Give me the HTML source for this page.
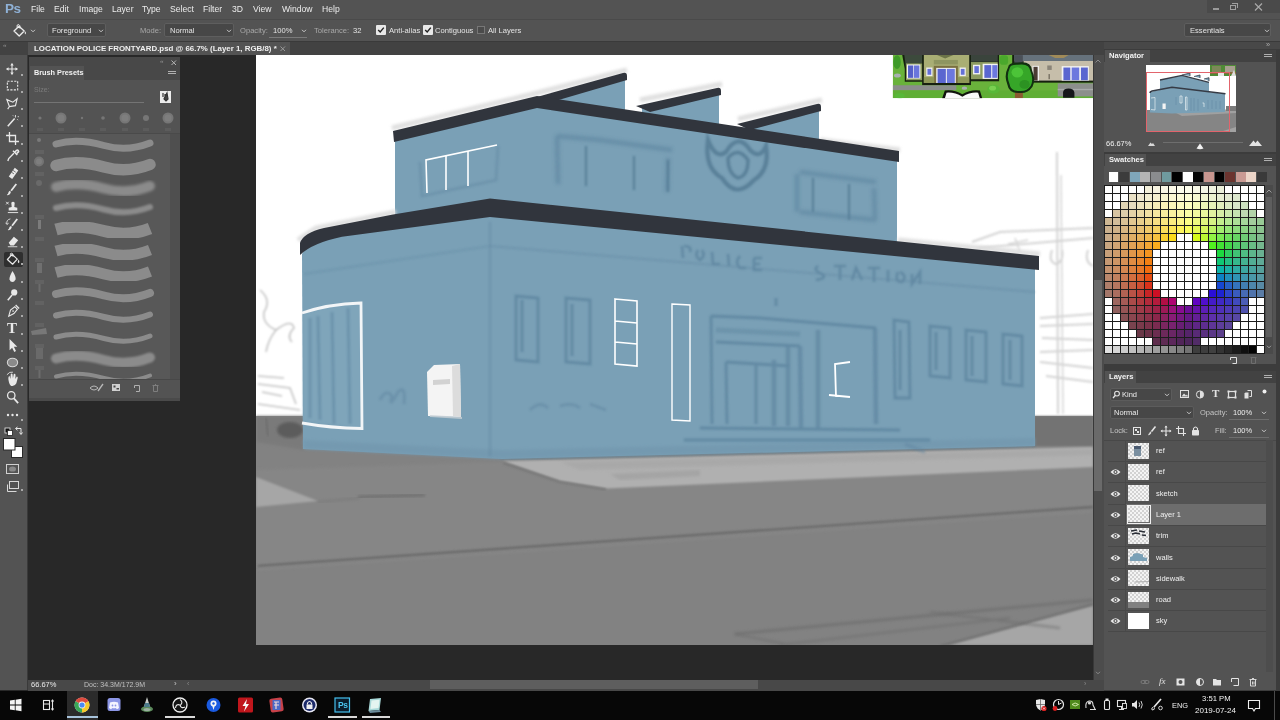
<!DOCTYPE html>
<html lang="en"><head><meta charset="utf-8"><title>Photoshop</title>
<style>
*{box-sizing:border-box;margin:0;padding:0}
html,body{width:1280px;height:720px;overflow:hidden;background:#282828}
body{font-family:"Liberation Sans",sans-serif;font-size:8px;color:#e0e0e0}
#app{position:relative;width:1280px;height:720px;overflow:hidden;background:#282828}
.abs{position:absolute}
.t{position:absolute;white-space:nowrap;line-height:1}
.m{top:5.400px;font-size:8.6px;color:#ececec}
.o{top:26.600px;font-size:7.6px;color:#e4e4e4}
.cb{top:25px;width:10px;height:10px;background:#e8e8e8;border-radius:1px}
.chk{background-color:#f4f4f4;background-image:linear-gradient(45deg,#d2d2d2 25%,transparent 25%,transparent 75%,#d2d2d2 75%),linear-gradient(45deg,#d2d2d2 25%,transparent 25%,transparent 75%,#d2d2d2 75%);background-size:4px 4px;background-position:0 0,2px 2px}
.t{will-change:transform}

</style></head>
<body>
<div id="app">
<!-- ===== menu bar ===== -->
<div class="abs" id="menubar" style="left:0;top:0;width:1280px;height:19px;background:#535353"></div>
<div class="t" style="left:5px;top:2px;font-size:13.500px;font-weight:bold;color:#8fb1d6;letter-spacing:-0.5px">Ps</div>
<div class="t m" style="left:31px">File</div>
<div class="t m" style="left:54px">Edit</div>
<div class="t m" style="left:79px">Image</div>
<div class="t m" style="left:112px">Layer</div>
<div class="t m" style="left:142px">Type</div>
<div class="t m" style="left:170px">Select</div>
<div class="t m" style="left:203px">Filter</div>
<div class="t m" style="left:232px">3D</div>
<div class="t m" style="left:253px">View</div>
<div class="t m" style="left:282px">Window</div>
<div class="t m" style="left:322px">Help</div>
<!-- window buttons -->
<div class="abs" style="left:1207px;top:0;width:73px;height:13px;background:#4a4a4a"></div>
<div class="abs" style="left:1213px;top:8px;width:6px;height:2px;background:#9a9a9a"></div>
<div class="abs" style="left:1230px;top:5px;width:6px;height:5px;border:1px solid #a0a0a0"></div>
<div class="abs" style="left:1232px;top:3px;width:6px;height:5px;border:1px solid #a0a0a0;border-left:none;border-bottom:none"></div>
<svg class="abs" style="left:1254px;top:3px" width="9" height="8"><path d="M1 0.5 L8 7.5 M8 0.5 L1 7.5" stroke="#a8a8a8" stroke-width="1.2" fill="none"/></svg>

<!-- ===== options bar ===== -->
<div class="abs" id="optbar" style="left:0;top:19px;width:1280px;height:22px;background:#535353;border-top:1px solid #4a4a4a"></div>
<div class="abs" style="left:0;top:41px;width:1280px;height:1px;background:#3a3a3a"></div>
<svg class="abs" style="left:12px;top:23px" width="16" height="15" viewBox="12 23 16 15"><path d="M19 26.200 L24.200 31 L19.200 36 L14 31 Z" fill="none" stroke="#ececec" stroke-width="1.300" stroke-linejoin="round"/><path d="M17.200 27.800 Q16.200 24.200 18.800 24.600 Q20.400 25 20 28.600" fill="none" stroke="#ececec" stroke-width="1"/><path d="M25.300 31.200 Q26.800 33.600 25.300 34.600 Q23.800 33.600 25.300 31.200 Z" fill="#ffffff"/></svg>
<svg class="abs" style="left:30px;top:29px" width="6" height="4"><path d="M1 0.800 L3 2.800 L5 0.800" stroke="#c8c8c8" fill="none"/></svg>
<div class="abs" style="left:47px;top:23px;width:59px;height:14px;background:#474747;border:1px solid #5e5e5e;border-radius:2px"></div>
<div class="t o" style="left:52px">Foreground</div>
<svg class="abs" style="left:98px;top:29px" width="6" height="4"><path d="M1 0.800 L3 2.800 L5 0.800" stroke="#c8c8c8" fill="none"/></svg>
<div class="t o" style="left:140px;color:#a8a8a8">Mode:</div>
<div class="abs" style="left:164px;top:23px;width:70px;height:14px;background:#474747;border:1px solid #5e5e5e;border-radius:2px"></div>
<div class="t o" style="left:170px">Normal</div>
<svg class="abs" style="left:226px;top:29px" width="6" height="4"><path d="M1 0.800 L3 2.800 L5 0.800" stroke="#c8c8c8" fill="none"/></svg>
<div class="t o" style="left:240px;color:#a8a8a8">Opacity:</div>
<div class="t o" style="left:273px">100%</div>
<div class="abs" style="left:269px;top:37px;width:38px;height:1px;background:#7a7a7a"></div>
<svg class="abs" style="left:301px;top:29px" width="6" height="4"><path d="M1 0.800 L3 2.800 L5 0.800" stroke="#c8c8c8" fill="none"/></svg>
<div class="t o" style="left:314px;color:#a8a8a8">Tolerance:</div>
<div class="t o" style="left:353px">32</div>
<div class="abs cb" style="left:376px"></div><svg class="abs" style="left:377px;top:26px" width="8" height="8"><path d="M1.2 4 L3.2 6 L6.8 1.6" stroke="#222" stroke-width="1.4" fill="none"/></svg>
<div class="t o" style="left:389px">Anti-alias</div>
<div class="abs cb" style="left:423px"></div><svg class="abs" style="left:424px;top:26px" width="8" height="8"><path d="M1.2 4 L3.2 6 L6.8 1.6" stroke="#222" stroke-width="1.4" fill="none"/></svg>
<div class="t o" style="left:435px">Contiguous</div>
<div class="abs" style="left:477px;top:26px;width:8px;height:8px;border:1px solid #777;background:#4b4b4b"></div>
<div class="t o" style="left:488px">All Layers</div>
<div class="abs" style="left:1184px;top:23px;width:87px;height:14px;background:#474747;border:1px solid #5e5e5e;border-radius:2px"></div>
<div class="t o" style="left:1190px">Essentials</div>
<svg class="abs" style="left:1264px;top:29px" width="6" height="4"><path d="M1 0.800 L3 2.800 L5 0.800" stroke="#c8c8c8" fill="none"/></svg>

<!-- ===== tab bar ===== -->
<div class="abs" style="left:0;top:42px;width:1104px;height:13px;background:#424242"></div>
<div class="abs" style="left:28px;top:42px;width:262px;height:13px;background:#535353"></div>
<div class="t" style="left:34px;top:45px;font-size:7.9px;font-weight:bold;color:#f0f0f0">LOCATION POLICE FRONTYARD.psd @ 66.7% (Layer 1, RGB/8) *</div>
<svg class="abs" style="left:280px;top:46px" width="6" height="6"><path d="M0.5 0.5 L5 5 M5 0.5 L0.5 5" stroke="#9a9a9a" fill="none"/></svg>
<div class="t" style="left:3px;top:42px;font-size:6px;color:#9a9a9a;letter-spacing:-0.5px">&#x2039;&#x2039;</div>

<!-- ===== left tool bar ===== -->
<div class="abs" id="toolbar" style="left:0;top:55px;width:27px;height:635px;background:#535353"></div>
<div class="abs" style="left:27px;top:55px;width:1px;height:635px;background:#3a3a3a"></div>
<div class="abs" style="left:4px;top:252px;width:19px;height:15px;background:#2f2f2f;border-radius:2px"></div>

<!-- ===== status bar ===== -->
<div class="abs" style="left:28px;top:680px;width:1076px;height:11px;background:#484848"></div>
<div class="t" style="left:31px;top:681px;font-size:7.5px;color:#e8e8e8">66.67%</div>
<div class="t" style="left:84px;top:681px;font-size:7px;color:#c0c0c0">Doc: 34.3M/172.9M</div>
<div class="t" style="left:174px;top:680px;font-size:8px;color:#c8c8c8">&#x203A;</div>
<div class="t" style="left:187px;top:680px;font-size:7px;color:#8a8a8a">&#x2039;</div>
<div class="abs" style="left:430px;top:680px;width:328px;height:9px;background:#5e5e5e"></div>
<div class="t" style="left:1084px;top:680px;font-size:7px;color:#8a8a8a">&#x203A;</div>
<!-- vertical scrollbar -->
<div class="abs" style="left:1093px;top:55px;width:11px;height:625px;background:#4c4c4c;border-left:1px solid #383838"></div>
<div class="abs" style="left:1094px;top:280px;width:8px;height:211px;background:#6a6a6a"></div>
<!-- ===== document canvas ===== -->
<svg class="abs" id="canvas" style="left:256px;top:55px" width="837" height="590" viewBox="256 55 837 590">
<defs>
<filter id="b1" x="-5%" y="-5%" width="110%" height="110%"><feGaussianBlur stdDeviation="0.8"/></filter>
<filter id="b2" x="-10%" y="-10%" width="120%" height="120%"><feGaussianBlur stdDeviation="1.6"/></filter>
<filter id="b3" x="-10%" y="-10%" width="120%" height="120%"><feGaussianBlur stdDeviation="3"/></filter>
<clipPath id="cv"><rect x="256" y="55" width="837" height="590"/></clipPath>
</defs>
<g clip-path="url(#cv)">
<rect x="256" y="55" width="837" height="590" fill="#ffffff"/>

<!-- ground -->
<g id="ground">
<path d="M256 416 L1093 416 L1093 645 L256 645 Z" fill="#828282"/>
<path d="M256 416 L304 416 L304 450 L256 442 Z" fill="#7a7a7a" filter="url(#b2)"/>
<path d="M1034 416 L1093 416 L1093 446 L1034 446 Z" fill="#737373" filter="url(#b1)"/>
<ellipse cx="290" cy="430" rx="13" ry="8" fill="#5c5c5c" filter="url(#b2)"/><path d="M266 418 L268 436" stroke="#6a6a6a" stroke-width="1.500" filter="url(#b1)"/>
<!-- band between sidewalk and road line -->
<path d="M256 470 L500 462 L1093 466 L1093 508 L256 566 Z" fill="#868686" filter="url(#b2)"/>
<!-- sidewalk -->
<path d="M503 461 L1093 447 L1093 467 L606 488.500 L560 481 Z" fill="#b0b0b0" filter="url(#b1)"/>
<path d="M560 462 L1093 449 L1093 455 L580 470 Z" fill="#a4a4a4" opacity="0.6" filter="url(#b2)"/><path d="M610 474 L700 470 L700 476 L620 480 Z" fill="#9c9c9c" opacity="0.6" filter="url(#b2)"/>
<path d="M503 463 L560 482 L606 489.500" stroke="#767676" stroke-width="2" fill="none" filter="url(#b1)"/><path d="M500 459 L1035 446" stroke="#5f7480" stroke-width="1.600" fill="none" filter="url(#b1)" opacity="0.8"/>
<!-- left wedge -->
<path d="M256 477 L318 501 L256 507 Z" fill="#a6a6a6" filter="url(#b1)"/>
<path d="M318 502 L360 498" stroke="#747474" stroke-width="2" filter="url(#b2)" opacity="0.6"/><path d="M358 497 L425 495" stroke="#6a6a6a" stroke-width="3" filter="url(#b2)" opacity="0.8"/>
<!-- road lines -->
<path d="M258 566 L1093 507" stroke="#6b6b6b" stroke-width="2.4" filter="url(#b1)"/>
<path d="M258 569 L1093 511" stroke="#8e8e8e" stroke-width="2" filter="url(#b2)" opacity="0.6"/>
<!-- bottom right corner -->
<path d="M950 645 L1093 606 L1093 645 Z" fill="#a6a6a6" filter="url(#b1)"/>
<path d="M735 634 L1093 600" stroke="#6a6a6a" stroke-width="2.2" filter="url(#b2)" opacity="0.8"/>
<path d="M780 645 L1010 618 M930 612 L1060 628 M735 634 L790 645" stroke="#6e6e6e" stroke-width="2" filter="url(#b2)" opacity="0.7"/>
<path d="M940 646 L1093 604" stroke="#6a6a6a" stroke-width="1.6" filter="url(#b1)" opacity="0.8"/>
</g>

<!-- sky sketch lines (right) -->
<g stroke="#cfcfcf" fill="none" stroke-width="2" filter="url(#b1)" opacity="0.9">
<path d="M1057 152 L1058 414"/><path d="M1061 175 L1063 414" stroke-width="1.4"/>
<path d="M972 242 L1000 232 L1093 228"/><path d="M978 248 L1093 238"/>
<path d="M1052 250 Q1048 262 1056 264 Q1064 262 1062 250"/>
<path d="M1088 250 Q1084 262 1093 266"/>
<path d="M1040 318 L1093 314 M1040 326 L1093 324 M1042 338 L1093 340 M1040 352 L1093 350 M1046 376 L1093 382 M1040 362 L1093 368"/>
<path d="M1015 238 L1020 252 M1008 244 L1028 240" stroke-width="1.4"/>
</g>
<!-- sky sketch lines (left) -->
<g stroke="#c4c4c4" fill="none" stroke-width="1.6" filter="url(#b1)">
<path d="M260 290 Q272 300 264 312 Q262 324 276 330 Q268 340 266 352"/>
<path d="M276 330 Q292 318 294 328 Q286 336 292 342"/>
<path d="M258 376 L284 378 M258 384 L290 388 L296 404 M262 392 L282 396 M258 404 L300 410"/>
</g>


<!-- reference picture (top-right) -->
<g transform="translate(885 50) scale(0.17188)">
<clipPath id="rc"><rect x="45" y="28" width="1166" height="252"/></clipPath>
<g clip-path="url(#rc)">
<rect x="45" y="28" width="1166" height="252" fill="#69b23b"/>
<rect x="45" y="205" width="370" height="30" fill="#8b8e8b"/>
<rect x="45" y="235" width="1166" height="45" fill="#5fae34"/>
<ellipse cx="70" cy="70" rx="22" ry="40" fill="#3f9a28"/>
<!-- left wing -->
<path d="M100 28 L230 28 L230 185 L115 185 L115 110 Z" fill="#16200f"/>
<path d="M112 28 L225 28 L225 72 L122 100 Z" fill="#3c4a3c"/>
<rect x="122" y="78" width="100" height="98" fill="#8b9a5e"/>
<rect x="128" y="84" width="78" height="82" fill="#f4f4f4"/><rect x="134" y="90" width="30" height="72" fill="#5560c8"/><rect x="168" y="90" width="32" height="72" fill="#6a76dc"/>
<!-- right wing -->
<rect x="488" y="28" width="176" height="154" fill="#16200f"/>
<rect x="492" y="28" width="164" height="40" fill="#3a443c"/>
<rect x="492" y="70" width="164" height="100" fill="#8c9b60"/>
<rect x="512" y="86" width="42" height="56" fill="#f0f0f0"/><rect x="520" y="94" width="26" height="40" fill="#6470d6"/>
<rect x="568" y="80" width="88" height="88" fill="#f4f4f4"/><rect x="578" y="88" width="40" height="74" fill="#5a66d0"/><rect x="624" y="88" width="30" height="74" fill="#6c78de"/>
<!-- central -->
<rect x="216" y="28" width="284" height="176" fill="#16200f"/>
<rect x="226" y="28" width="264" height="164" fill="#a9ae74"/>
<path d="M300 28 L400 28 L350 50 Z" fill="#6c7448"/>
<rect x="284" y="58" width="140" height="26" fill="#8e9560"/>
<rect x="284" y="92" width="140" height="100" fill="#7a7040"/>
<rect x="298" y="104" width="114" height="88" fill="#f0f0f0"/><rect x="306" y="110" width="48" height="82" fill="#5a66d0"/><rect x="360" y="110" width="46" height="82" fill="#6c78de"/>
<rect x="240" y="102" width="36" height="50" fill="#f0f0f0"/><rect x="247" y="110" width="22" height="34" fill="#6470d6"/>
<rect x="434" y="102" width="36" height="50" fill="#f0f0f0"/><rect x="441" y="110" width="22" height="34" fill="#6470d6"/>
<rect x="226" y="158" width="60" height="34" fill="#8e9858"/><rect x="424" y="158" width="66" height="34" fill="#8e9858"/>
<!-- bushes -->
<rect x="668" y="30" width="48" height="56" rx="18" fill="#4aa82c"/>
<ellipse cx="632" cy="228" rx="36" ry="26" fill="#58b838"/><ellipse cx="626" cy="222" rx="20" ry="14" fill="#7ad050"/>
<ellipse cx="86" cy="266" rx="30" ry="16" fill="#58b838"/>
<ellipse cx="72" cy="148" rx="20" ry="12" fill="#a8b0b0"/><ellipse cx="462" cy="222" rx="16" ry="9" fill="#a8b0b0"/>
<!-- right building -->
<rect x="740" y="28" width="480" height="162" fill="#16200f"/>
<rect x="752" y="28" width="460" height="36" fill="#66727c"/>
<rect x="752" y="30" width="50" height="44" fill="#4a5058"/>
<rect x="806" y="64" width="406" height="114" fill="#c6beaa"/>
<path d="M950 28 L1070 28 L1040 46 L990 46 Z" fill="#a08a58"/>
<rect x="858" y="92" width="38" height="86" fill="#f0f0f0"/><rect x="864" y="98" width="24" height="80" fill="#4a3c34"/>
<rect x="944" y="90" width="26" height="26" fill="#8a8478"/><rect x="952" y="140" width="6" height="30" fill="#5a5448"/>
<rect x="1028" y="94" width="158" height="84" fill="#f4f4f4"/><rect x="1038" y="102" width="40" height="74" fill="#5a66d0"/><rect x="1086" y="102" width="44" height="74" fill="#6c78de"/><rect x="1140" y="102" width="40" height="74" fill="#5a66d0"/>
<rect x="1005" y="194" width="210" height="76" fill="#8c8f8c"/><rect x="1005" y="226" width="210" height="8" fill="#a8abaa"/>
<path d="M1036 278 L1036 244 Q1040 224 1068 224 Q1098 224 1102 248 L1102 278 Z" fill="#15171a"/>
<!-- tree -->
<rect x="756" y="236" width="46" height="44" fill="#8a5a30"/>
<path d="M716 100 Q720 70 770 74 Q850 60 856 120 Q880 170 858 214 Q830 256 780 250 Q720 252 712 200 Q690 150 716 100 Z" fill="#123010"/>
<path d="M726 104 Q730 84 772 86 Q840 74 846 124 Q866 170 848 208 Q826 242 782 238 Q730 240 724 196 Q704 150 726 104 Z" fill="#36a628"/>
<ellipse cx="770" cy="130" rx="34" ry="30" fill="#4cc438"/>
<ellipse cx="812" cy="200" rx="30" ry="26" fill="#2c9222"/>
<!-- book -->
<path d="M332 282 L348 236 Q400 228 450 258 Q500 228 552 236 L566 282 Z" fill="#10140c"/>
<path d="M348 282 L358 248 Q404 244 450 272 Q496 244 542 248 L552 282 Z" fill="#fafafa"/>
</g>
</g>

<!-- ===== building ===== -->
<g id="bldg">
<!-- saw-tooth blue -->
<path d="M548 101 L625 80 L625 112 L548 106 Z" fill="#7aa0b6"/>
<path d="M642 108 L719 93 L719 126 L642 114 Z" fill="#7aa0b6"/>
<path d="M742 128 L819 111 L819 142 L742 134 Z" fill="#7aa0b6"/>
<!-- upper block -->
<path d="M395 138 L537 104 L897 158 L897 250 L490 215 L395 218 Z" fill="#7aa0b6"/>
<!-- lower block -->
<path d="M302 254 Q306 245 320 240 L342 235 L490 214 L1035 266 L1035 446 L502 459 L303 449 Z" fill="#7aa0b6"/>
<path d="M303 440 L304 449 L502 459 L1035 446 L1035 438 L502 450 Z" fill="#7398af" filter="url(#b2)" opacity="0.8"/>
</g>

<!-- soft light halo of sketch behind trims -->
<g stroke="#dcdcdc" stroke-width="5" fill="none" filter="url(#b2)" opacity="0.9">
<path d="M392 128 L537 93 L627 70"/><path d="M640 100 L722 84"/><path d="M738 119 L822 100"/><path d="M820 140 L900 150"/>
<path d="M298 240 L316 228 L396 212"/><path d="M898 240 L1040 254"/>
</g>
<!-- shading strokes on walls (darker blue) -->
<g stroke="#5f86a0" fill="none" stroke-width="2.8" filter="url(#b1)" opacity="0.85">
<!-- upper-middle window -->
<path d="M557 136 L558 184 M557 136 L600 140 L672 150 M668 158 L667 192" stroke-width="4.500" filter="url(#b2)" opacity="0.8"/><path d="M586 146 L586 186 M634 156 L634 190 M668 160 L668 192" stroke-width="1.800" stroke="#4f7690"/>
<!-- badge -->
<path d="M708 140 Q704 168 722 178 Q736 200 754 180 Q770 170 766 146 Q760 160 750 150 Q738 132 726 152 Q716 160 708 140 Z" stroke-width="4.200" stroke="#557b94"/>
<path d="M728 158 Q738 146 748 160 Q748 176 738 178 Q728 174 728 158 Z" stroke-width="3.400" stroke="#557b94"/>
<!-- upper right window -->
<path d="M797 174 L797 212 M800 172 L876 182 M874 188 L875 220 M800 212 L876 220" stroke-width="4.500" filter="url(#b2)" opacity="0.75"/><path d="M813 178 L813 212 M849 184 L849 220" stroke-width="1.800" stroke="#4f7690"/>
<!-- upper-left window shadow -->
<path d="M420 162 L422 196 L496 180 L498 146" opacity="0.5"/>
<!-- sign text POLICE STATION -->
<path d="M682 246 L683 258 M684 246 Q692 246 690 252 M698 250 Q694 256 700 260 Q706 256 702 250 M712 252 L713 264 L720 264 M728 254 L729 266 M740 256 Q734 262 740 268 L746 268 M754 258 L754 270 L762 270 M754 264 L760 264 M754 258 L762 258" stroke-width="2.6"/>
<path d="M818 266 Q812 270 822 274 Q828 278 816 280 M834 266 L846 266 M840 266 L840 280 M852 280 L856 268 L862 280 M868 268 L880 268 M874 268 L874 282 M888 270 L888 282 M898 272 Q894 282 902 282 Q908 276 900 272 M912 274 L912 284 L920 272 L920 284" stroke-width="2.6"/>
<path d="M490 222 L490 456" stroke-width="2" opacity="0.5"/>
<path d="M490 246 L1035 292" stroke-width="2" opacity="0.45"/>
<path d="M304 274 L490 246" stroke-width="2" opacity="0.4"/>
<!-- lower windows left pair -->
<path d="M516 296 L516 360 L538 362 L538 298 Z M522 300 L522 352 M566 298 L566 362 L590 364 L590 300 Z M572 304 L572 356"/>
<path d="M303 314 Q330 304 361 303 L361 428 L303 421 Z" fill="#82a8be" stroke="none" opacity="0.7"/>
<!-- corner window inner shading -->
<path d="M318 316 L320 420 M332 312 L334 424 M348 308 L350 424 M310 318 L310 418" stroke-width="3" opacity="0.6"/>
<!-- graffiti -->
<path d="M380 400 Q386 388 392 396 Q388 410 398 392 Q406 384 404 404 M530 410 Q540 400 548 408 M560 406 Q572 402 580 408 M590 404 L606 410"  opacity="0.6"/>
<!-- door / entrance -->
<path d="M711 316 L712 424 M711 316 L760 318 L876 328 M716 342 L800 346 M726 362 L727 424 M756 364 L756 424 M726 362 L790 366 M776 298 L776 306 M700 428 L900 430 M684 440 L930 440"/>
<path d="M774 360 L774 426 M788 346 L788 426 M800 346 L801 428 M818 330 L818 428 M875 328 L876 424" stroke-width="4.500" opacity="0.8"/>
<path d="M716 330 L800 334" stroke-width="5" opacity="0.55"/>
<!-- windows right -->
<path d="M894 320 L895 398 L910 398 L909 322 Z M900 330 L900 390 M930 326 L930 376 L950 378 L950 328 Z M936 332 L936 370 M966 330 L966 380 L986 382 L986 332 Z M972 336 L972 376 M1003 334 L1003 384 L1022 386 L1022 336 Z M1010 340 L1010 380"/>
<path d="M905 444 L925 452" stroke-width="4" opacity="0.5"/>
</g>

<!-- white outlines -->
<g stroke="#ffffff" fill="none" stroke-width="1.6">
<path d="M427 193 L426 160 L497 145"/><path d="M446 156 L446 190 M468 151 L468 186"/>
<path d="M302 313 Q328 304 361 303 L362 428.500 Q330 428 302 423" stroke-width="2.800" stroke="#f2f5f7"/>
<path d="M615 299 L637 301 L637 366 L615 364 Z M615 321 L637 323 M615 342 L637 344"/>
<path d="M672 304 L690 305 L690 421 L672 420 Z" stroke-width="1.4"/>
<path d="M836 397 L835 364 L850 362 M829 395 L850 397" stroke-width="1.8"/>
</g>
<!-- mailbox -->
<path d="M427 372 L434 365 L460 364 L461 417 L428 416 Z" fill="#f4f4f4"/>
<path d="M452 366 L460 364 L461 417 L453 416 Z" fill="#dcdcdc"/>
<path d="M433 380 L450 379 L450 384 L433 385 Z" fill="#d2d2d2"/>
<path d="M430 416 L462 418" stroke="#c8d0d6" stroke-width="2" opacity="0.8"/>

<!-- dark trims -->
<g fill="#31353d">
<path d="M537 97 L623 73 Q627 72 627 76 L627 80 L545 104 Z"/>
<path d="M636 106 L717 88 Q721 87 721 91 L721 95 L650 112 Z"/>
<path d="M737 124 L817 104 Q821 103 821 107 L821 111 L750 130 Z"/>
<path d="M393 131 L537 96 L899 151 L899 162 L537 108 L394 142 Z"/>
<path d="M300 255 L300 243 Q303 233 324 228 L393 214.4 L490 198.5 L1039 256 L1039 270 L490 217 L342 236.7 Q312 243 300 255 Z"/>
</g>
</g>
</svg>
<!-- ===== Brush Presets panel ===== -->
<div class="abs" style="left:29px;top:57px;width:151px;height:344px;background:#535353"></div>
<div class="abs" style="left:29px;top:57px;width:151px;height:9px;background:#484848"></div>
<div class="abs" style="left:29px;top:66px;width:151px;height:14px;background:#484848"></div>
<div class="abs" style="left:30px;top:66px;width:54px;height:14px;background:#535353"></div>
<div class="t" style="left:34px;top:69px;font-size:7.3px;font-weight:bold;color:#f2f2f2">Brush Presets</div>
<div class="t" style="left:160px;top:58px;font-size:6px;color:#9a9a9a;letter-spacing:-0.5px">&#x2039;&#x2039;</div>
<svg class="abs" style="left:171px;top:60px" width="6" height="6"><path d="M0.5 0.5 L5 5 M5 0.5 L0.5 5" stroke="#b4b4b4" fill="none"/></svg>
<div class="abs" style="left:168px;top:71px;width:8px;height:1px;background:#b0b0b0;box-shadow:0 2px 0 #b0b0b0"></div>
<div class="t" style="left:34px;top:86px;font-size:7px;color:#7c7c7c">Size:</div>
<div class="abs" style="left:34px;top:101.500px;width:110px;height:1.600px;background:#747474"></div>
<div class="abs" style="left:160px;top:91px;width:11px;height:12px;background:#ececec"></div>
<svg class="abs" style="left:160px;top:91px" width="11" height="12"><path d="M3 2 L3 6 M5 3 L5 6 M7 2 L8 8 L6 10 L4 8 Z" stroke="#333" stroke-width="1.2" fill="#444"/></svg>
<svg class="abs" style="left:29px;top:108px" width="151" height="26" viewBox="29 108 151 26"><circle cx="40" cy="118" r="1.6" fill="#767676"/><rect x="37" y="128" width="6" height="3" fill="#5c5c5c"/><circle cx="61" cy="118" r="5.5" fill="#767676"/><circle cx="61" cy="118" r="3.5" fill="#7e7e7e"/><rect x="58" y="128" width="6" height="3" fill="#5c5c5c"/><circle cx="82" cy="118" r="1.2" fill="#767676"/><rect x="79" y="128" width="6" height="3" fill="#5c5c5c"/><circle cx="103" cy="118" r="1.8" fill="#767676"/><rect x="100" y="128" width="6" height="3" fill="#5c5c5c"/><circle cx="125" cy="118" r="5.5" fill="#767676"/><circle cx="125" cy="118" r="3.5" fill="#7e7e7e"/><rect x="122" y="128" width="6" height="3" fill="#5c5c5c"/><circle cx="146" cy="118" r="3" fill="#767676"/><rect x="143" y="128" width="6" height="3" fill="#5c5c5c"/><circle cx="168" cy="118" r="5.5" fill="#767676"/><circle cx="168" cy="118" r="3.5" fill="#7e7e7e"/><rect x="165" y="128" width="6" height="3" fill="#5c5c5c"/></svg>
<div class="abs" style="left:29px;top:134px;width:141px;height:245px;background:#585858"></div>
<div class="abs" style="left:170px;top:134px;width:10px;height:245px;background:#4f4f4f"></div>
<div class="abs" style="left:29px;top:133px;width:151px;height:1px;background:#4a4a4a"></div>
<svg class="abs" style="left:29px;top:134px" width="141" height="245" viewBox="29 134 141 245"><defs><filter id="lf2" x="-10%" y="-60%" width="120%" height="220%"><feGaussianBlur stdDeviation="1.4"/></filter><filter id="lf3" x="-10%" y="-60%" width="120%" height="220%"><feGaussianBlur stdDeviation="1.1"/></filter><filter id="lf4" x="-10%" y="-60%" width="120%" height="220%"><feGaussianBlur stdDeviation="0.3"/></filter><filter id="lf5" x="-10%" y="-60%" width="120%" height="220%"><feGaussianBlur stdDeviation="0.5"/></filter><filter id="lf6" x="-10%" y="-60%" width="120%" height="220%"><feGaussianBlur stdDeviation="0.5"/></filter><filter id="lf7" x="-10%" y="-60%" width="120%" height="220%"><feGaussianBlur stdDeviation="0.4"/></filter><filter id="lf8" x="-10%" y="-60%" width="120%" height="220%"><feGaussianBlur stdDeviation="0.5"/></filter><filter id="lf9" x="-10%" y="-60%" width="120%" height="220%"><feGaussianBlur stdDeviation="0.3"/></filter><filter id="lf10" x="-10%" y="-60%" width="120%" height="220%"><feGaussianBlur stdDeviation="1"/></filter><filter id="lf11" x="-10%" y="-60%" width="120%" height="220%"><feGaussianBlur stdDeviation="0.4"/></filter></defs><path d="M56 144 C 72 139.5, 88 141, 104 145.5 S 136 148.5, 150 143" stroke="#8b8b8b" stroke-width="7" fill="none" stroke-linecap="round"/><path d="M56 165.5 C 72 161, 88 162.5, 104 167 S 136 170, 150 164.5" stroke="#8b8b8b" stroke-width="11.5" fill="none" stroke-linecap="round"/><path d="M56 187 C 72 182.5, 88 184, 104 188.5 S 136 191.5, 150 186" stroke="#8b8b8b" stroke-width="10" fill="none" stroke-linecap="round" filter="url(#lf2)"/><path d="M56 208 C 72 203.5, 88 205, 104 209.5 S 136 212.5, 150 207" stroke="#8b8b8b" stroke-width="6" fill="none" stroke-linecap="round" filter="url(#lf3)"/><path d="M56 229.5 C 72 225, 88 226.5, 104 231 S 136 234, 150 228.5" stroke="#8b8b8b" stroke-width="12" fill="none" stroke-linecap="butt" filter="url(#lf4)"/><path d="M56 251 C 72 246.5, 88 248, 104 252.5 S 136 255.5, 150 250" stroke="#8b8b8b" stroke-width="11" fill="none" stroke-linecap="butt" filter="url(#lf5)"/><path d="M56 272.5 C 72 268, 88 269.5, 104 274 S 136 277, 150 271.5" stroke="#8b8b8b" stroke-width="11" fill="none" stroke-linecap="butt" filter="url(#lf6)"/><path d="M56 294 C 72 289.5, 88 291, 104 295.5 S 136 298.5, 150 293" stroke="#8b8b8b" stroke-width="8" fill="none" stroke-linecap="round" filter="url(#lf7)"/><path d="M56 315.5 C 72 311, 88 312.5, 104 317 S 136 320, 150 314.5" stroke="#8b8b8b" stroke-width="6" fill="none" stroke-linecap="round" filter="url(#lf8)"/><path d="M56 337 C 72 332.5, 88 334, 104 338.5 S 136 341.5, 150 336" stroke="#8b8b8b" stroke-width="5" fill="none" stroke-linecap="round" filter="url(#lf9)"/><path d="M56 358.5 C 72 354, 88 355.5, 104 360 S 136 363, 150 357.5" stroke="#8b8b8b" stroke-width="10" fill="none" stroke-linecap="round" filter="url(#lf10)"/><path d="M56 376.5 C 72 372, 88 373.5, 104 378 S 136 381, 150 375.5" stroke="#8b8b8b" stroke-width="4" fill="none" stroke-linecap="round" filter="url(#lf11)"/><circle cx="39" cy="140" r="2" fill="#7a7a7a"/><circle cx="39" cy="161.5" r="5" fill="#747474"/><circle cx="39" cy="161.5" r="3" fill="#7e7e7e"/><circle cx="39" cy="183" r="3" fill="#6a6a6a"/><rect x="38" y="220" width="3" height="9" fill="#7c7c7c"/><rect x="37" y="263" width="5" height="10" fill="#707070"/><rect x="38.5" y="283" width="2" height="9" fill="#6c6c6c"/><path d="M31 331 L46 328 L47 334 L32 335 Z" fill="#787878"/><rect x="36" y="347" width="7" height="12" fill="#6a6a6a"/><rect x="38.5" y="370" width="2" height="8" fill="#6c6c6c"/><rect x="35" y="150" width="9" height="4" fill="#626262"/><rect x="35" y="172" width="9" height="4" fill="#626262"/><rect x="35" y="215" width="9" height="4" fill="#626262"/><rect x="35" y="237" width="9" height="4" fill="#626262"/><rect x="35" y="258" width="9" height="4" fill="#626262"/><rect x="35" y="280" width="9" height="4" fill="#626262"/><rect x="35" y="301" width="9" height="4" fill="#626262"/><rect x="35" y="323" width="9" height="4" fill="#626262"/><rect x="35" y="344" width="9" height="4" fill="#626262"/><rect x="35" y="366" width="9" height="4" fill="#626262"/></svg>
<div class="abs" style="left:29px;top:379px;width:151px;height:1px;background:#484848"></div>
<svg class="abs" style="left:88px;top:382px" width="76" height="12" viewBox="88 382 76 12"><path d="M90 388 Q94 384 98 388 Q94 392 90 388 Z" fill="none" stroke="#b8b8b8"/><path d="M98 391 L103 384" stroke="#b8b8b8" stroke-width="1.3"/><rect x="112" y="384" width="8" height="7" fill="#d0d0d0"/><rect x="113.5" y="385.5" width="2" height="2" fill="#444"/><rect x="116.5" y="388" width="2.5" height="1.5" fill="#444"/><path d="M134.5 385.5 L139.5 385.5 L139.5 391.5 L136 391.5 M134.500 385.5 L134.500 388" stroke="#b0b0b0" fill="none"/><path d="M153.5 386 L153.5 391.500 L157.500 391.500 L157.500 386 M152.500 385.5 L158.500 385.5 M155 384.5 L156 384.5" stroke="#7e7e7e" fill="none"/></svg>
<div class="abs" style="left:29px;top:398px;width:151px;height:3px;background:#4a4a4a"></div>
<!-- toolbar icons -->
<svg class="abs" style="left:0;top:55px" width="27" height="400" viewBox="0 55 27 400" fill="none" stroke="#e8e8e8" stroke-width="1.3"><g transform="translate(12 69) scale(0.86) translate(-12 -69)"><path d="M12 63 L12 75 M6 69 L18 69" /><path d="M12 62 L10 65 L14 65 Z M12 76 L10 73 L14 73 Z M5 69 L8 67 L8 71 Z M19 69 L16 67 L16 71 Z" fill="#e8e8e8" stroke="none"/></g><g transform="translate(12.5 86) scale(0.86) translate(-12.5 -86)"><rect x="6.500" y="80.5" width="12" height="10" stroke-dasharray="2.5 1.5"/></g><g transform="translate(12 103.5) scale(0.86) translate(-12 -103.5)"><path d="M6 99 L13 102 L18 98 L16 106 L9 107 Z M9 107 L7 110"/></g><g transform="translate(12.5 121) scale(0.86) translate(-12.5 -121)"><path d="M7 127 L15 118" stroke-width="1.8"/><path d="M16 114 L16 117 M18.500 116 L20 116 M13 114.500 L14 115.500 M18 119 L19 120" stroke-width="1"/></g><g transform="translate(12.5 138.5) scale(0.86) translate(-12.5 -138.5)"><path d="M9 131 L9 142 L20 142 M5 135 L16 135 L16 146" stroke-width="1.5"/></g><g transform="translate(13 155.5) scale(0.86) translate(-13 -155.5)"><path d="M7 162 L8 159 L14 153" stroke-width="1.6"/><path d="M13 150 L18 155 M15 152 L17 149.500 Q19 148.500 19.500 151 L17.500 153" stroke-width="1.8"/></g><g transform="translate(13.5 173) scale(0.86) translate(-13.5 -173)"><path d="M8 177 L15 167 L19 170 L12 180 Z" fill="#e8e8e8" stroke="none"/><path d="M11 172 L14 174 M13 170 L16 172" stroke="#535353" stroke-width="0.9"/></g><g transform="translate(12 189.5) scale(0.86) translate(-12 -189.5)"><path d="M17 183 L11 191" stroke-width="2"/><path d="M10 191 Q11.500 193 9.500 195 Q7 196.500 6 196 Q8 194 8 192.500 Q9 191 10 191 Z" fill="#e8e8e8" stroke="none"/></g><g transform="translate(13 207) scale(0.86) translate(-13 -207)"><path d="M11 202 Q13 200 15 202 L14.500 207 L18 208 L18 211 L8 211 L8 208 L11.500 207 Z" fill="#e8e8e8" stroke="none"/><path d="M7 213.500 L19 213.500 M5 201 L8 204 M8 201 L5 204" stroke-width="1.1"/></g><g transform="translate(12.5 224.5) scale(0.86) translate(-12.5 -224.5)"><path d="M18 218 L12 226" stroke-width="2"/><path d="M11 226 Q12.500 228 10.500 230 Q8 231.500 7 231 Q9 229 9 227.500 Z" fill="#e8e8e8" stroke="none"/><path d="M6 224 Q5 219 10 218 M4.500 222.500 L6 224.500 L8 223" stroke-width="1"/></g><g transform="translate(13 242) scale(0.86) translate(-13 -242)"><path d="M8 243 L14 236 L19 240 L14 246 L10 246 Z" fill="#e8e8e8" stroke="none"/><path d="M7 247.500 L18 247.500" stroke-width="1"/></g><g transform="translate(13 259.5) scale(0.86) translate(-13 -259.5)"><path d="M12 253.500 L18 259 L12.500 265 L6.500 259.500 Z" stroke-width="1.400" stroke-linejoin="round"/><path d="M10 255.500 Q9 251.500 11.800 252 Q13.500 252.500 13 256.500" stroke-width="1"/><path d="M19.500 259.500 Q21.300 262.500 19.500 263.800 Q17.700 262.500 19.500 259.500 Z" fill="#e8e8e8" stroke="none"/></g><g transform="translate(12.5 276.5) scale(0.86) translate(-12.5 -276.5)"><path d="M12.500 270 Q17 277 16 280 Q14.500 283 12.500 283 Q10 283 9 280 Q8.500 277 12.500 270 Z" fill="#e8e8e8" stroke="none"/></g><g transform="translate(12.5 295) scale(0.86) translate(-12.5 -295)"><circle cx="14.500" cy="292" r="3.600" fill="#e8e8e8" stroke="none"/><path d="M12 295 L7 301" stroke-width="1.8"/></g><g transform="translate(13.5 311) scale(0.86) translate(-13.5 -311)"><path d="M8 317 L10 310 L15 306 L18 309 L14 314 Z" stroke-width="1.3"/><circle cx="13" cy="311" r="1" fill="#e8e8e8" stroke="none"/><path d="M16 304 L20 308" stroke-width="1.5"/></g></svg>
<div class="t" style="left:7px;top:321px;font-size:15px;font-weight:bold;color:#e8e8e8;font-family:'Liberation Serif',serif">T</div>
<svg class="abs" style="left:0;top:335px" width="27" height="150" viewBox="0 335 27 150" fill="none" stroke="#e8e8e8" stroke-width="1.3"><g transform="translate(13 345.5) scale(0.86) translate(-13 -345.5)"><path d="M9 338 L9 351 L12 348 L14.500 353 L16.500 352 L14 347 L18 347 Z" fill="#e8e8e8" stroke="none"/></g><g transform="translate(12.5 362.5) scale(0.86) translate(-12.5 -362.5)"><ellipse cx="12.500" cy="362.500" rx="6" ry="5" fill="#8a8a8a" stroke="#d8d8d8" stroke-width="1.2"/></g><g transform="translate(12.5 379.5) scale(0.86) translate(-12.5 -379.5)"><path d="M8 381 Q7 376 9 375 L10 379 L10.500 373 Q12 372 12.500 373.500 L13 378 L14 373 Q15.500 372.500 16 374 L15.800 379 L17.500 376 Q19 376 18.500 378 L17 384 Q15 388 11 387 Q9 386 8 381 Z" fill="#e8e8e8" stroke="none"/><path d="M6 374 Q9 370 13 371" stroke-width="1"/></g><g transform="translate(13 398) scale(0.86) translate(-13 -398)"><circle cx="11" cy="395" r="4.300" stroke-width="1.5"/><path d="M14 398.500 L19 404" stroke-width="2"/></g><circle cx="8" cy="415" r="1.200" fill="#e8e8e8" stroke="none"/><circle cx="12.500" cy="415" r="1.200" fill="#e8e8e8" stroke="none"/><circle cx="17" cy="415" r="1.200" fill="#e8e8e8" stroke="none"/><rect x="5" y="428" width="5" height="5" fill="#111" stroke="#eee" stroke-width="0.8"/><rect x="7.500" y="430.500" width="5" height="5" fill="#fff" stroke="#222" stroke-width="0.8"/><path d="M16 428.500 L21 428.500 L21 434 M17.500 427 L15.500 428.500 L17.500 430.200 M19.500 432.500 L21 434.500 L22.500 432.500" stroke-width="1"/><rect x="11.500" y="446.500" width="11" height="11" fill="#fff" stroke="#2a2a2a" stroke-width="1"/><rect x="3.500" y="438.500" width="11.500" height="11.500" fill="#fff" stroke="#2a2a2a" stroke-width="1"/><rect x="6.500" y="464.500" width="12" height="9" stroke="#d0d0d0" stroke-width="1"/><ellipse cx="12.500" cy="469" rx="3.500" ry="2.600" fill="#8a8a8a" stroke="none"/></svg>
<svg class="abs" style="left:5px;top:480px" width="18" height="14" viewBox="0 0 18 14" fill="none" stroke="#d8d8d8" stroke-width="1"><rect x="4.500" y="1.500" width="9" height="7"/><path d="M2.500 4.500 L2.500 11.500 L11.500 11.500"/></svg>
<div class="abs" style="left:21px;top:74px;width:1.500px;height:1.500px;background:#a8a8a8"></div><div class="abs" style="left:21px;top:91px;width:1.500px;height:1.500px;background:#a8a8a8"></div><div class="abs" style="left:21px;top:108px;width:1.500px;height:1.500px;background:#a8a8a8"></div><div class="abs" style="left:21px;top:125px;width:1.500px;height:1.500px;background:#a8a8a8"></div><div class="abs" style="left:21px;top:143px;width:1.500px;height:1.500px;background:#a8a8a8"></div><div class="abs" style="left:21px;top:160px;width:1.500px;height:1.500px;background:#a8a8a8"></div><div class="abs" style="left:21px;top:177px;width:1.500px;height:1.500px;background:#a8a8a8"></div><div class="abs" style="left:21px;top:195px;width:1.500px;height:1.500px;background:#a8a8a8"></div><div class="abs" style="left:21px;top:212px;width:1.500px;height:1.500px;background:#a8a8a8"></div><div class="abs" style="left:21px;top:229px;width:1.500px;height:1.500px;background:#a8a8a8"></div><div class="abs" style="left:21px;top:246px;width:1.500px;height:1.500px;background:#a8a8a8"></div><div class="abs" style="left:21px;top:263px;width:1.500px;height:1.500px;background:#a8a8a8"></div><div class="abs" style="left:21px;top:281px;width:1.500px;height:1.500px;background:#a8a8a8"></div><div class="abs" style="left:21px;top:298px;width:1.500px;height:1.500px;background:#a8a8a8"></div><div class="abs" style="left:21px;top:315px;width:1.500px;height:1.500px;background:#a8a8a8"></div><div class="abs" style="left:21px;top:333px;width:1.500px;height:1.500px;background:#a8a8a8"></div><div class="abs" style="left:21px;top:350px;width:1.500px;height:1.500px;background:#a8a8a8"></div><div class="abs" style="left:21px;top:367px;width:1.500px;height:1.500px;background:#a8a8a8"></div><div class="abs" style="left:21px;top:384px;width:1.500px;height:1.500px;background:#a8a8a8"></div><div class="abs" style="left:21px;top:419px;width:1.500px;height:1.500px;background:#a8a8a8"></div><div class="abs" style="left:21px;top:489px;width:1.500px;height:1.500px;background:#a8a8a8"></div>
<!-- ===== right dock ===== -->
<div class="abs" style="left:1104px;top:42px;width:176px;height:649px;background:#3c3c3c"></div>
<div class="abs" style="left:1104px;top:42px;width:176px;height:7px;background:#484848"></div>
<div class="t" style="left:1266px;top:41px;font-size:7px;color:#b0b0b0;letter-spacing:-0.5px">&#x203A;&#x203A;</div>
<svg class="abs" style="left:1095px;top:59px" width="6" height="4"><path d="M0.5 3.5 L3 1 L5.5 3.5" stroke="#8a8a8a" fill="none"/></svg>
<svg class="abs" style="left:1095px;top:671px" width="6" height="4"><path d="M1 0.800 L3 2.800 L5 0.800" stroke="#8a8a8a" fill="none"/></svg>
<div class="abs" style="left:1104px;top:50px;width:172px;height:102px;background:#535353"></div>
<div class="abs" style="left:1104px;top:50px;width:172px;height:12px;background:#424242"></div>
<div class="abs" style="left:1105px;top:50px;width:45px;height:12px;background:#535353"></div>
<div class="t" style="left:1109px;top:52px;font-size:7.6px;font-weight:bold;color:#f2f2f2">Navigator</div>
<div class="abs" style="left:1264px;top:54px;width:8px;height:1px;background:#b0b0b0;box-shadow:0 2px 0 #b0b0b0"></div>
<svg class="abs" style="left:1146px;top:65px" width="90" height="67" viewBox="0 0 90 67"><rect width="90" height="67" fill="#fff"/><rect x="0" y="45" width="90" height="22" fill="#858585"/><path d="M28 47 L90 44 L90 48 L36 51 Z" fill="#a0a0a0"/><path d="M74 67 L90 62 L90 67 Z" fill="#a2a2a2"/><rect x="80" y="41" width="10" height="5" fill="#7a7a7a"/><path d="M14 15 L36 10.500 L63 17.500 L63 30 L14 26 Z" fill="#7aa0b6"/><path d="M36 10 L44 8 L44 11 M48 11.500 L54 10 L54 13 M58 14 L63 12.700 L63 16" fill="#7aa0b6" stroke="#363b45" stroke-width="0.8"/><path d="M4 27 L26 22.500 L79 29 L79 47 L26 48.500 L4 47.500 Z" fill="#7aa0b6"/><path d="M14 15 L36 10.300 L63 17.300" stroke="#363b45" stroke-width="1.3" fill="none"/><path d="M4 28 Q4 26.500 6 26 L26 22.200 L79.500 28.800" stroke="#363b45" stroke-width="1.600" fill="none"/><path d="M5 33 L9 32.500 L9 45 L5 44.500 M34 31 L36 31 L36 38 L34 38 Z M39.500 32 L41 32 L41 45 L39.500 45 Z M56.500 38 L58 38 L58 42" stroke="#e8f0f4" stroke-width="0.7" fill="none"/><rect x="16.500" y="38.500" width="3.200" height="5.500" fill="#f4f4f4"/><path d="M30 32 L30 40 M45 33 L45 46 M48 33 L48 46 M52 34 L52 46 M62 35 L62 44 M66 35 L66 44 M70 36 L70 44 M74 36 L74 44" stroke="#6990a8" stroke-width="0.8"/><rect x="64" y="0" width="26" height="11" fill="#4f8a36"/><rect x="66" y="1" width="9" height="6" fill="#7c8858"/><rect x="79" y="1" width="10" height="6" fill="#a8a090"/><rect x="64" y="7" width="26" height="2" fill="#c84a40" opacity="0.5"/><rect x="72" y="7" width="6" height="4" fill="#e8e8e8"/><path d="M85 11 L88 5 L90 11 Z" fill="#ddd"/><rect x="0.500" y="7.500" width="83" height="59" fill="none" stroke="#e2646c" stroke-width="1"/></svg>
<div class="t" style="left:1106px;top:140px;font-size:7.5px;color:#f0f0f0">66.67%</div>
<div class="abs" style="left:1163px;top:142px;width:80px;height:1px;background:#6e6e6e"></div>
<svg class="abs" style="left:1146px;top:138px" width="120" height="12" viewBox="1146 138 120 12"><path d="M1148 146 L1150.500 142.500 L1152 144 L1153 143 L1155 146 Z" fill="#d8d8d8"/><path d="M1249 146 L1253.500 140.500 L1255.500 143 L1257.500 140.500 L1262 146 Z" fill="#e4e4e4"/><path d="M1196.500 148.500 L1200 143.500 L1203.500 148.500 Q1200 150 1196.500 148.500 Z" fill="#f2f2f2"/></svg>
<div class="abs" style="left:1104px;top:154px;width:172px;height:210px;background:#535353"></div>
<div class="abs" style="left:1104px;top:154px;width:172px;height:12px;background:#424242"></div>
<div class="abs" style="left:1105px;top:154px;width:41px;height:12px;background:#535353"></div>
<div class="t" style="left:1109px;top:156px;font-size:7.6px;font-weight:bold;color:#f2f2f2">Swatches</div>
<div class="abs" style="left:1264px;top:158px;width:8px;height:1px;background:#b0b0b0;box-shadow:0 2px 0 #b0b0b0"></div>
<svg class="abs" style="left:1104px;top:170px" width="172" height="190" viewBox="1104 170 172 190" shape-rendering="crispEdges"><rect x="1108.5" y="171.500" width="9.800" height="10.500" fill="#ffffff"/><rect x="1119.1" y="171.500" width="9.800" height="10.500" fill="#3c3c3c"/><rect x="1129.7" y="171.500" width="9.800" height="10.500" fill="#7fa6ba"/><rect x="1140.3" y="171.500" width="9.800" height="10.500" fill="#b4b4b4"/><rect x="1150.9" y="171.500" width="9.800" height="10.500" fill="#8a8c8e"/><rect x="1161.5" y="171.500" width="9.800" height="10.500" fill="#6f9a9e"/><rect x="1172.1" y="171.500" width="9.800" height="10.500" fill="#000000"/><rect x="1182.7" y="171.500" width="9.800" height="10.500" fill="#ffffff"/><rect x="1193.3" y="171.500" width="9.800" height="10.500" fill="#060606"/><rect x="1203.9" y="171.500" width="9.800" height="10.500" fill="#c8968f"/><rect x="1214.5" y="171.500" width="9.800" height="10.500" fill="#000000"/><rect x="1225.1" y="171.500" width="9.800" height="10.500" fill="#6b342f"/><rect x="1235.7" y="171.500" width="9.800" height="10.500" fill="#c99a93"/><rect x="1246.3" y="171.500" width="9.800" height="10.500" fill="#ecd5c8"/><rect x="1256.9" y="171.500" width="9.800" height="10.500" fill="#3a3a3a"/><rect x="1104" y="185" width="161" height="169" fill="#1c1c1c"/><rect x="1105" y="186" width="7" height="7" fill="#ffffff"/><rect x="1113" y="186" width="7" height="7" fill="#ffffff"/><rect x="1121" y="186" width="7" height="7" fill="#ffffff"/><rect x="1129" y="186" width="7" height="7" fill="#ffffff"/><rect x="1137" y="186" width="7" height="7" fill="#ffffff"/><rect x="1145" y="186" width="7" height="7" fill="#f4f0db"/><rect x="1153" y="186" width="7" height="7" fill="#f6f3e0"/><rect x="1161" y="186" width="7" height="7" fill="#f9f6e5"/><rect x="1169" y="186" width="7" height="7" fill="#fbf9e7"/><rect x="1177" y="186" width="7" height="7" fill="#fdfcec"/><rect x="1185" y="186" width="7" height="7" fill="#fdfdec"/><rect x="1193" y="186" width="7" height="7" fill="#f8f9e7"/><rect x="1201" y="186" width="7" height="7" fill="#f4f6e5"/><rect x="1209" y="186" width="7" height="7" fill="#eff2df"/><rect x="1217" y="186" width="7" height="7" fill="#ebefda"/><rect x="1225" y="186" width="7" height="7" fill="#ffffff"/><rect x="1233" y="186" width="7" height="7" fill="#ffffff"/><rect x="1241" y="186" width="7" height="7" fill="#ffffff"/><rect x="1249" y="186" width="7" height="7" fill="#ffffff"/><rect x="1257" y="186" width="7" height="7" fill="#ffffff"/><rect x="1105" y="194" width="7" height="7" fill="#ffffff"/><rect x="1113" y="194" width="7" height="7" fill="#ffffff"/><rect x="1121" y="194" width="7" height="7" fill="#ffffff"/><rect x="1129" y="194" width="7" height="7" fill="#eae1c6"/><rect x="1137" y="194" width="7" height="7" fill="#f0e9d1"/><rect x="1145" y="194" width="7" height="7" fill="#f3eed3"/><rect x="1153" y="194" width="7" height="7" fill="#f6f0d0"/><rect x="1161" y="194" width="7" height="7" fill="#f8f4d0"/><rect x="1169" y="194" width="7" height="7" fill="#fbf7d2"/><rect x="1177" y="194" width="7" height="7" fill="#fdfbd7"/><rect x="1185" y="194" width="7" height="7" fill="#fdfdd7"/><rect x="1193" y="194" width="7" height="7" fill="#f7f9d2"/><rect x="1201" y="194" width="7" height="7" fill="#f1f5d0"/><rect x="1209" y="194" width="7" height="7" fill="#ecf2d0"/><rect x="1217" y="194" width="7" height="7" fill="#e8eed3"/><rect x="1225" y="194" width="7" height="7" fill="#e3ead2"/><rect x="1233" y="194" width="7" height="7" fill="#dde8ce"/><rect x="1241" y="194" width="7" height="7" fill="#ffffff"/><rect x="1249" y="194" width="7" height="7" fill="#ffffff"/><rect x="1257" y="194" width="7" height="7" fill="#ffffff"/><rect x="1105" y="202" width="7" height="7" fill="#ffffff"/><rect x="1113" y="202" width="7" height="7" fill="#ffffff"/><rect x="1121" y="202" width="7" height="7" fill="#e1d4b4"/><rect x="1129" y="202" width="7" height="7" fill="#e6dbbe"/><rect x="1137" y="202" width="7" height="7" fill="#ede2bd"/><rect x="1145" y="202" width="7" height="7" fill="#f3e9bd"/><rect x="1153" y="202" width="7" height="7" fill="#f6ecb9"/><rect x="1161" y="202" width="7" height="7" fill="#f9f0b8"/><rect x="1169" y="202" width="7" height="7" fill="#fbf5ba"/><rect x="1177" y="202" width="7" height="7" fill="#fdfac0"/><rect x="1185" y="202" width="7" height="7" fill="#fdfdc0"/><rect x="1193" y="202" width="7" height="7" fill="#f5f9ba"/><rect x="1201" y="202" width="7" height="7" fill="#edf5b8"/><rect x="1209" y="202" width="7" height="7" fill="#e7f1b9"/><rect x="1217" y="202" width="7" height="7" fill="#e2eebd"/><rect x="1225" y="202" width="7" height="7" fill="#dbeac3"/><rect x="1233" y="202" width="7" height="7" fill="#d8e6ca"/><rect x="1241" y="202" width="7" height="7" fill="#cce0c0"/><rect x="1249" y="202" width="7" height="7" fill="#ffffff"/><rect x="1257" y="202" width="7" height="7" fill="#ffffff"/><rect x="1105" y="210" width="7" height="7" fill="#ffffff"/><rect x="1113" y="210" width="7" height="7" fill="#d8c5a3"/><rect x="1121" y="210" width="7" height="7" fill="#dcccaa"/><rect x="1129" y="210" width="7" height="7" fill="#e4d2a7"/><rect x="1137" y="210" width="7" height="7" fill="#ebd9a4"/><rect x="1145" y="210" width="7" height="7" fill="#f2e0a3"/><rect x="1153" y="210" width="7" height="7" fill="#f6e7a0"/><rect x="1161" y="210" width="7" height="7" fill="#f9ec9e"/><rect x="1169" y="210" width="7" height="7" fill="#fbf2a0"/><rect x="1177" y="210" width="7" height="7" fill="#fdf8a6"/><rect x="1185" y="210" width="7" height="7" fill="#fcfda6"/><rect x="1193" y="210" width="7" height="7" fill="#f2f9a0"/><rect x="1201" y="210" width="7" height="7" fill="#e8f59e"/><rect x="1209" y="210" width="7" height="7" fill="#e0f1a0"/><rect x="1217" y="210" width="7" height="7" fill="#d6eda6"/><rect x="1225" y="210" width="7" height="7" fill="#cde9ad"/><rect x="1233" y="210" width="7" height="7" fill="#c5e3b1"/><rect x="1241" y="210" width="7" height="7" fill="#bfdab3"/><rect x="1249" y="210" width="7" height="7" fill="#b2d5a9"/><rect x="1257" y="210" width="7" height="7" fill="#ffffff"/><rect x="1105" y="218" width="7" height="7" fill="#ceb793"/><rect x="1113" y="218" width="7" height="7" fill="#d2bd9a"/><rect x="1121" y="218" width="7" height="7" fill="#dac296"/><rect x="1129" y="218" width="7" height="7" fill="#e2c790"/><rect x="1137" y="218" width="7" height="7" fill="#e9ce8b"/><rect x="1145" y="218" width="7" height="7" fill="#f0d687"/><rect x="1153" y="218" width="7" height="7" fill="#f7df84"/><rect x="1161" y="218" width="7" height="7" fill="#f9e680"/><rect x="1169" y="218" width="7" height="7" fill="#fbed80"/><rect x="1177" y="218" width="7" height="7" fill="#fdf686"/><rect x="1185" y="218" width="7" height="7" fill="#fbfd86"/><rect x="1193" y="218" width="7" height="7" fill="#edf980"/><rect x="1201" y="218" width="7" height="7" fill="#e0f580"/><rect x="1209" y="218" width="7" height="7" fill="#d5f285"/><rect x="1217" y="218" width="7" height="7" fill="#c3ee8d"/><rect x="1225" y="218" width="7" height="7" fill="#b5e893"/><rect x="1233" y="218" width="7" height="7" fill="#acdf97"/><rect x="1241" y="218" width="7" height="7" fill="#a6d79b"/><rect x="1249" y="218" width="7" height="7" fill="#a3ce9d"/><rect x="1257" y="218" width="7" height="7" fill="#98ca95"/><rect x="1105" y="226" width="7" height="7" fill="#cab08d"/><rect x="1113" y="226" width="7" height="7" fill="#cfb289"/><rect x="1121" y="226" width="7" height="7" fill="#d8b682"/><rect x="1129" y="226" width="7" height="7" fill="#e0bb7a"/><rect x="1137" y="226" width="7" height="7" fill="#e8c172"/><rect x="1145" y="226" width="7" height="7" fill="#efc96a"/><rect x="1153" y="226" width="7" height="7" fill="#f5d363"/><rect x="1161" y="226" width="7" height="7" fill="#fadd5c"/><rect x="1169" y="226" width="7" height="7" fill="#fce758"/><rect x="1177" y="226" width="7" height="7" fill="#fef35c"/><rect x="1185" y="226" width="7" height="7" fill="#f9fd5d"/><rect x="1193" y="226" width="7" height="7" fill="#e5f958"/><rect x="1201" y="226" width="7" height="7" fill="#d5f65d"/><rect x="1209" y="226" width="7" height="7" fill="#bcf266"/><rect x="1217" y="226" width="7" height="7" fill="#a4ed70"/><rect x="1225" y="226" width="7" height="7" fill="#95e577"/><rect x="1233" y="226" width="7" height="7" fill="#8ddb7d"/><rect x="1241" y="226" width="7" height="7" fill="#8ad283"/><rect x="1249" y="226" width="7" height="7" fill="#8ac989"/><rect x="1257" y="226" width="7" height="7" fill="#8bc38f"/><rect x="1105" y="234" width="7" height="7" fill="#c8ab89"/><rect x="1113" y="234" width="7" height="7" fill="#cfab7e"/><rect x="1121" y="234" width="7" height="7" fill="#d7ab71"/><rect x="1129" y="234" width="7" height="7" fill="#dfae65"/><rect x="1137" y="234" width="7" height="7" fill="#e8b35a"/><rect x="1145" y="234" width="7" height="7" fill="#efb94e"/><rect x="1153" y="234" width="7" height="7" fill="#f6c340"/><rect x="1161" y="234" width="7" height="7" fill="#fbd031"/><rect x="1169" y="234" width="7" height="7" fill="#fddc1c"/><rect x="1177" y="234" width="7" height="7" fill="#ffffff"/><rect x="1185" y="234" width="7" height="7" fill="#ffffff"/><rect x="1193" y="234" width="7" height="7" fill="#d7fb1c"/><rect x="1201" y="234" width="7" height="7" fill="#bbf732"/><rect x="1209" y="234" width="7" height="7" fill="#91f344"/><rect x="1217" y="234" width="7" height="7" fill="#79eb51"/><rect x="1225" y="234" width="7" height="7" fill="#6de05b"/><rect x="1233" y="234" width="7" height="7" fill="#68d564"/><rect x="1241" y="234" width="7" height="7" fill="#6ecc74"/><rect x="1249" y="234" width="7" height="7" fill="#78c484"/><rect x="1257" y="234" width="7" height="7" fill="#82bd8f"/><rect x="1105" y="242" width="7" height="7" fill="#c8a580"/><rect x="1113" y="242" width="7" height="7" fill="#d0a474"/><rect x="1121" y="242" width="7" height="7" fill="#d8a365"/><rect x="1129" y="242" width="7" height="7" fill="#e0a256"/><rect x="1137" y="242" width="7" height="7" fill="#e8a345"/><rect x="1145" y="242" width="7" height="7" fill="#f1a734"/><rect x="1153" y="242" width="7" height="7" fill="#f9ae1e"/><rect x="1161" y="242" width="7" height="7" fill="#ffffff"/><rect x="1169" y="242" width="7" height="7" fill="#ffffff"/><rect x="1177" y="242" width="7" height="7" fill="#ffffff"/><rect x="1185" y="242" width="7" height="7" fill="#ffffff"/><rect x="1193" y="242" width="7" height="7" fill="#ffffff"/><rect x="1201" y="242" width="7" height="7" fill="#ffffff"/><rect x="1209" y="242" width="7" height="7" fill="#51f41f"/><rect x="1217" y="242" width="7" height="7" fill="#41e433"/><rect x="1225" y="242" width="7" height="7" fill="#42d848"/><rect x="1233" y="242" width="7" height="7" fill="#50ce65"/><rect x="1241" y="242" width="7" height="7" fill="#5dc578"/><rect x="1249" y="242" width="7" height="7" fill="#69be85"/><rect x="1257" y="242" width="7" height="7" fill="#75b78e"/><rect x="1105" y="250" width="7" height="7" fill="#c79f79"/><rect x="1113" y="250" width="7" height="7" fill="#cf9c6b"/><rect x="1121" y="250" width="7" height="7" fill="#d89a5c"/><rect x="1129" y="250" width="7" height="7" fill="#e0974a"/><rect x="1137" y="250" width="7" height="7" fill="#ea9536"/><rect x="1145" y="250" width="7" height="7" fill="#f3941f"/><rect x="1153" y="250" width="7" height="7" fill="#ffffff"/><rect x="1161" y="250" width="7" height="7" fill="#ffffff"/><rect x="1169" y="250" width="7" height="7" fill="#ffffff"/><rect x="1177" y="250" width="7" height="7" fill="#ffffff"/><rect x="1185" y="250" width="7" height="7" fill="#ffffff"/><rect x="1193" y="250" width="7" height="7" fill="#ffffff"/><rect x="1201" y="250" width="7" height="7" fill="#ffffff"/><rect x="1209" y="250" width="7" height="7" fill="#ffffff"/><rect x="1217" y="250" width="7" height="7" fill="#1cd93f"/><rect x="1225" y="250" width="7" height="7" fill="#2fcd61"/><rect x="1233" y="250" width="7" height="7" fill="#40c475"/><rect x="1241" y="250" width="7" height="7" fill="#4fbd83"/><rect x="1249" y="250" width="7" height="7" fill="#5db68b"/><rect x="1257" y="250" width="7" height="7" fill="#69b091"/><rect x="1105" y="258" width="7" height="7" fill="#c59873"/><rect x="1113" y="258" width="7" height="7" fill="#ce9565"/><rect x="1121" y="258" width="7" height="7" fill="#d69055"/><rect x="1129" y="258" width="7" height="7" fill="#df8c43"/><rect x="1137" y="258" width="7" height="7" fill="#e9862d"/><rect x="1145" y="258" width="7" height="7" fill="#f38013"/><rect x="1153" y="258" width="7" height="7" fill="#ffffff"/><rect x="1161" y="258" width="7" height="7" fill="#ffffff"/><rect x="1169" y="258" width="7" height="7" fill="#ffffff"/><rect x="1177" y="258" width="7" height="7" fill="#ffffff"/><rect x="1185" y="258" width="7" height="7" fill="#ffffff"/><rect x="1193" y="258" width="7" height="7" fill="#ffffff"/><rect x="1201" y="258" width="7" height="7" fill="#ffffff"/><rect x="1209" y="258" width="7" height="7" fill="#ffffff"/><rect x="1217" y="258" width="7" height="7" fill="#0fc874"/><rect x="1225" y="258" width="7" height="7" fill="#24c083"/><rect x="1233" y="258" width="7" height="7" fill="#35b98c"/><rect x="1241" y="258" width="7" height="7" fill="#44b391"/><rect x="1249" y="258" width="7" height="7" fill="#52ad94"/><rect x="1257" y="258" width="7" height="7" fill="#5ea996"/><rect x="1105" y="266" width="7" height="7" fill="#c3926f"/><rect x="1113" y="266" width="7" height="7" fill="#cb8d61"/><rect x="1121" y="266" width="7" height="7" fill="#d48751"/><rect x="1129" y="266" width="7" height="7" fill="#dd813f"/><rect x="1137" y="266" width="7" height="7" fill="#e67829"/><rect x="1145" y="266" width="7" height="7" fill="#f16d0f"/><rect x="1153" y="266" width="7" height="7" fill="#ffffff"/><rect x="1161" y="266" width="7" height="7" fill="#ffffff"/><rect x="1169" y="266" width="7" height="7" fill="#ffffff"/><rect x="1177" y="266" width="7" height="7" fill="#ffffff"/><rect x="1185" y="266" width="7" height="7" fill="#ffffff"/><rect x="1193" y="266" width="7" height="7" fill="#ffffff"/><rect x="1201" y="266" width="7" height="7" fill="#ffffff"/><rect x="1209" y="266" width="7" height="7" fill="#ffffff"/><rect x="1217" y="266" width="7" height="7" fill="#0ab5a9"/><rect x="1225" y="266" width="7" height="7" fill="#1db0a6"/><rect x="1233" y="266" width="7" height="7" fill="#2eaca3"/><rect x="1241" y="266" width="7" height="7" fill="#3ca8a1"/><rect x="1249" y="266" width="7" height="7" fill="#49a49e"/><rect x="1257" y="266" width="7" height="7" fill="#55a09b"/><rect x="1105" y="274" width="7" height="7" fill="#b9876c"/><rect x="1113" y="274" width="7" height="7" fill="#c1815f"/><rect x="1121" y="274" width="7" height="7" fill="#ca7950"/><rect x="1129" y="274" width="7" height="7" fill="#d36e3f"/><rect x="1137" y="274" width="7" height="7" fill="#dc602b"/><rect x="1145" y="274" width="7" height="7" fill="#e74d12"/><rect x="1153" y="274" width="7" height="7" fill="#ffffff"/><rect x="1161" y="274" width="7" height="7" fill="#ffffff"/><rect x="1169" y="274" width="7" height="7" fill="#ffffff"/><rect x="1177" y="274" width="7" height="7" fill="#ffffff"/><rect x="1185" y="274" width="7" height="7" fill="#ffffff"/><rect x="1193" y="274" width="7" height="7" fill="#ffffff"/><rect x="1201" y="274" width="7" height="7" fill="#ffffff"/><rect x="1209" y="274" width="7" height="7" fill="#ffffff"/><rect x="1217" y="274" width="7" height="7" fill="#0d81c5"/><rect x="1225" y="274" width="7" height="7" fill="#208ebc"/><rect x="1233" y="274" width="7" height="7" fill="#3094b4"/><rect x="1241" y="274" width="7" height="7" fill="#3e97ae"/><rect x="1249" y="274" width="7" height="7" fill="#4a98a8"/><rect x="1257" y="274" width="7" height="7" fill="#5698a3"/><rect x="1105" y="282" width="7" height="7" fill="#af7e6a"/><rect x="1113" y="282" width="7" height="7" fill="#b7765f"/><rect x="1121" y="282" width="7" height="7" fill="#bf6d51"/><rect x="1129" y="282" width="7" height="7" fill="#c75f42"/><rect x="1137" y="282" width="7" height="7" fill="#d04d30"/><rect x="1145" y="282" width="7" height="7" fill="#da321b"/><rect x="1153" y="282" width="7" height="7" fill="#ffffff"/><rect x="1161" y="282" width="7" height="7" fill="#ffffff"/><rect x="1169" y="282" width="7" height="7" fill="#ffffff"/><rect x="1177" y="282" width="7" height="7" fill="#ffffff"/><rect x="1185" y="282" width="7" height="7" fill="#ffffff"/><rect x="1193" y="282" width="7" height="7" fill="#ffffff"/><rect x="1201" y="282" width="7" height="7" fill="#ffffff"/><rect x="1209" y="282" width="7" height="7" fill="#ffffff"/><rect x="1217" y="282" width="7" height="7" fill="#1547d2"/><rect x="1225" y="282" width="7" height="7" fill="#2660c5"/><rect x="1233" y="282" width="7" height="7" fill="#3473bb"/><rect x="1241" y="282" width="7" height="7" fill="#417fb2"/><rect x="1249" y="282" width="7" height="7" fill="#4d86ab"/><rect x="1257" y="282" width="7" height="7" fill="#588aa5"/><rect x="1105" y="290" width="7" height="7" fill="#a37669"/><rect x="1113" y="290" width="7" height="7" fill="#ab6d5f"/><rect x="1121" y="290" width="7" height="7" fill="#b26253"/><rect x="1129" y="290" width="7" height="7" fill="#ba5346"/><rect x="1137" y="290" width="7" height="7" fill="#c23f37"/><rect x="1145" y="290" width="7" height="7" fill="#c82426"/><rect x="1153" y="290" width="7" height="7" fill="#cc0f24"/><rect x="1161" y="290" width="7" height="7" fill="#ffffff"/><rect x="1169" y="290" width="7" height="7" fill="#ffffff"/><rect x="1177" y="290" width="7" height="7" fill="#ffffff"/><rect x="1185" y="290" width="7" height="7" fill="#ffffff"/><rect x="1193" y="290" width="7" height="7" fill="#ffffff"/><rect x="1201" y="290" width="7" height="7" fill="#ffffff"/><rect x="1209" y="290" width="7" height="7" fill="#2a0ed8"/><rect x="1217" y="290" width="7" height="7" fill="#1e23d2"/><rect x="1225" y="290" width="7" height="7" fill="#2d45cb"/><rect x="1233" y="290" width="7" height="7" fill="#3a5bbf"/><rect x="1241" y="290" width="7" height="7" fill="#466ab5"/><rect x="1249" y="290" width="7" height="7" fill="#5074ad"/><rect x="1257" y="290" width="7" height="7" fill="#5a7ca6"/><rect x="1105" y="298" width="7" height="7" fill="#ffffff"/><rect x="1113" y="298" width="7" height="7" fill="#9e665f"/><rect x="1121" y="298" width="7" height="7" fill="#a55b56"/><rect x="1129" y="298" width="7" height="7" fill="#ab4b49"/><rect x="1137" y="298" width="7" height="7" fill="#b03a3f"/><rect x="1145" y="298" width="7" height="7" fill="#b32a3b"/><rect x="1153" y="298" width="7" height="7" fill="#b41b3c"/><rect x="1161" y="298" width="7" height="7" fill="#b10e45"/><rect x="1169" y="298" width="7" height="7" fill="#ae0472"/><rect x="1177" y="298" width="7" height="7" fill="#ffffff"/><rect x="1185" y="298" width="7" height="7" fill="#ffffff"/><rect x="1193" y="298" width="7" height="7" fill="#6104c2"/><rect x="1201" y="298" width="7" height="7" fill="#500fcd"/><rect x="1209" y="298" width="7" height="7" fill="#441bc9"/><rect x="1217" y="298" width="7" height="7" fill="#4028c5"/><rect x="1225" y="298" width="7" height="7" fill="#3934c1"/><rect x="1233" y="298" width="7" height="7" fill="#404abd"/><rect x="1241" y="298" width="7" height="7" fill="#4b5db6"/><rect x="1249" y="298" width="7" height="7" fill="#ffffff"/><rect x="1257" y="298" width="7" height="7" fill="#ffffff"/><rect x="1105" y="306" width="7" height="7" fill="#ffffff"/><rect x="1113" y="306" width="7" height="7" fill="#90605e"/><rect x="1121" y="306" width="7" height="7" fill="#965455"/><rect x="1129" y="306" width="7" height="7" fill="#9b484d"/><rect x="1137" y="306" width="7" height="7" fill="#9e3b48"/><rect x="1145" y="306" width="7" height="7" fill="#9f2e46"/><rect x="1153" y="306" width="7" height="7" fill="#9e2248"/><rect x="1161" y="306" width="7" height="7" fill="#9c1956"/><rect x="1169" y="306" width="7" height="7" fill="#991279"/><rect x="1177" y="306" width="7" height="7" fill="#870e92"/><rect x="1185" y="306" width="7" height="7" fill="#6b0f97"/><rect x="1193" y="306" width="7" height="7" fill="#6514aa"/><rect x="1201" y="306" width="7" height="7" fill="#5c1db7"/><rect x="1209" y="306" width="7" height="7" fill="#5427ba"/><rect x="1217" y="306" width="7" height="7" fill="#4f30b8"/><rect x="1225" y="306" width="7" height="7" fill="#4e3ab5"/><rect x="1233" y="306" width="7" height="7" fill="#4c44b2"/><rect x="1241" y="306" width="7" height="7" fill="#4e51ae"/><rect x="1249" y="306" width="7" height="7" fill="#ffffff"/><rect x="1257" y="306" width="7" height="7" fill="#ffffff"/><rect x="1105" y="314" width="7" height="7" fill="#ffffff"/><rect x="1113" y="314" width="7" height="7" fill="#ffffff"/><rect x="1121" y="314" width="7" height="7" fill="#875054"/><rect x="1129" y="314" width="7" height="7" fill="#8a464f"/><rect x="1137" y="314" width="7" height="7" fill="#8c3b4b"/><rect x="1145" y="314" width="7" height="7" fill="#8c314a"/><rect x="1153" y="314" width="7" height="7" fill="#8b274b"/><rect x="1161" y="314" width="7" height="7" fill="#8b215f"/><rect x="1169" y="314" width="7" height="7" fill="#881c76"/><rect x="1177" y="314" width="7" height="7" fill="#761882"/><rect x="1185" y="314" width="7" height="7" fill="#651987"/><rect x="1193" y="314" width="7" height="7" fill="#631f96"/><rect x="1201" y="314" width="7" height="7" fill="#6027a2"/><rect x="1209" y="314" width="7" height="7" fill="#5d30aa"/><rect x="1217" y="314" width="7" height="7" fill="#5838a9"/><rect x="1225" y="314" width="7" height="7" fill="#5740a8"/><rect x="1233" y="314" width="7" height="7" fill="#5848a5"/><rect x="1241" y="314" width="7" height="7" fill="#ffffff"/><rect x="1249" y="314" width="7" height="7" fill="#ffffff"/><rect x="1257" y="314" width="7" height="7" fill="#ffffff"/><rect x="1105" y="322" width="7" height="7" fill="#ffffff"/><rect x="1113" y="322" width="7" height="7" fill="#ffffff"/><rect x="1121" y="322" width="7" height="7" fill="#ffffff"/><rect x="1129" y="322" width="7" height="7" fill="#7a434e"/><rect x="1137" y="322" width="7" height="7" fill="#7b3a4b"/><rect x="1145" y="322" width="7" height="7" fill="#7b324a"/><rect x="1153" y="322" width="7" height="7" fill="#7b2b50"/><rect x="1161" y="322" width="7" height="7" fill="#7b265f"/><rect x="1169" y="322" width="7" height="7" fill="#78226f"/><rect x="1177" y="322" width="7" height="7" fill="#681e73"/><rect x="1185" y="322" width="7" height="7" fill="#5d2078"/><rect x="1193" y="322" width="7" height="7" fill="#5e2685"/><rect x="1201" y="322" width="7" height="7" fill="#5e2d90"/><rect x="1209" y="322" width="7" height="7" fill="#5e3598"/><rect x="1217" y="322" width="7" height="7" fill="#5d3d9b"/><rect x="1225" y="322" width="7" height="7" fill="#5b449a"/><rect x="1233" y="322" width="7" height="7" fill="#ffffff"/><rect x="1241" y="322" width="7" height="7" fill="#ffffff"/><rect x="1249" y="322" width="7" height="7" fill="#ffffff"/><rect x="1257" y="322" width="7" height="7" fill="#ffffff"/><rect x="1105" y="330" width="7" height="7" fill="#ffffff"/><rect x="1113" y="330" width="7" height="7" fill="#ffffff"/><rect x="1121" y="330" width="7" height="7" fill="#ffffff"/><rect x="1129" y="330" width="7" height="7" fill="#ffffff"/><rect x="1137" y="330" width="7" height="7" fill="#6a3847"/><rect x="1145" y="330" width="7" height="7" fill="#6a3147"/><rect x="1153" y="330" width="7" height="7" fill="#6c2d50"/><rect x="1161" y="330" width="7" height="7" fill="#6c295a"/><rect x="1169" y="330" width="7" height="7" fill="#6a2665"/><rect x="1177" y="330" width="7" height="7" fill="#5c2366"/><rect x="1185" y="330" width="7" height="7" fill="#55246a"/><rect x="1193" y="330" width="7" height="7" fill="#582a75"/><rect x="1201" y="330" width="7" height="7" fill="#5a317f"/><rect x="1209" y="330" width="7" height="7" fill="#5b3887"/><rect x="1217" y="330" width="7" height="7" fill="#5d408c"/><rect x="1225" y="330" width="7" height="7" fill="#ffffff"/><rect x="1233" y="330" width="7" height="7" fill="#ffffff"/><rect x="1241" y="330" width="7" height="7" fill="#ffffff"/><rect x="1249" y="330" width="7" height="7" fill="#ffffff"/><rect x="1257" y="330" width="7" height="7" fill="#ffffff"/><rect x="1105" y="338" width="7" height="7" fill="#ffffff"/><rect x="1113" y="338" width="7" height="7" fill="#ffffff"/><rect x="1121" y="338" width="7" height="7" fill="#ffffff"/><rect x="1129" y="338" width="7" height="7" fill="#ffffff"/><rect x="1137" y="338" width="7" height="7" fill="#ffffff"/><rect x="1145" y="338" width="7" height="7" fill="#ffffff"/><rect x="1153" y="338" width="7" height="7" fill="#5e2d4c"/><rect x="1161" y="338" width="7" height="7" fill="#5e2a53"/><rect x="1169" y="338" width="7" height="7" fill="#5c275b"/><rect x="1177" y="338" width="7" height="7" fill="#512559"/><rect x="1185" y="338" width="7" height="7" fill="#4d265c"/><rect x="1193" y="338" width="7" height="7" fill="#512c67"/><rect x="1201" y="338" width="7" height="7" fill="#ffffff"/><rect x="1209" y="338" width="7" height="7" fill="#ffffff"/><rect x="1217" y="338" width="7" height="7" fill="#ffffff"/><rect x="1225" y="338" width="7" height="7" fill="#ffffff"/><rect x="1233" y="338" width="7" height="7" fill="#ffffff"/><rect x="1241" y="338" width="7" height="7" fill="#ffffff"/><rect x="1249" y="338" width="7" height="7" fill="#ffffff"/><rect x="1257" y="338" width="7" height="7" fill="#ffffff"/><rect x="1105" y="346" width="7" height="7" fill="#e1e1e1"/><rect x="1113" y="346" width="7" height="7" fill="#d6d6d6"/><rect x="1121" y="346" width="7" height="7" fill="#cbcbcb"/><rect x="1129" y="346" width="7" height="7" fill="#c0c0c0"/><rect x="1137" y="346" width="7" height="7" fill="#b5b5b5"/><rect x="1145" y="346" width="7" height="7" fill="#aaaaaa"/><rect x="1153" y="346" width="7" height="7" fill="#9f9f9f"/><rect x="1161" y="346" width="7" height="7" fill="#949494"/><rect x="1169" y="346" width="7" height="7" fill="#898989"/><rect x="1177" y="346" width="7" height="7" fill="#7e7e7e"/><rect x="1185" y="346" width="7" height="7" fill="#737373"/><rect x="1193" y="346" width="7" height="7" fill="#3e3e3e"/><rect x="1201" y="346" width="7" height="7" fill="#3e3e3e"/><rect x="1209" y="346" width="7" height="7" fill="#404040"/><rect x="1217" y="346" width="7" height="7" fill="#343434"/><rect x="1225" y="346" width="7" height="7" fill="#282828"/><rect x="1233" y="346" width="7" height="7" fill="#1c1c1c"/><rect x="1241" y="346" width="7" height="7" fill="#101010"/><rect x="1249" y="346" width="7" height="7" fill="#040404"/><rect x="1257" y="346" width="7" height="7" fill="#ffffff"/></svg>
<div class="abs" style="left:1265px;top:185px;width:8px;height:169px;background:#4a4a4a"></div>
<div class="abs" style="left:1266px;top:197px;width:6px;height:140px;background:#5e5e5e"></div>
<svg class="abs" style="left:1266px;top:189px" width="6" height="4"><path d="M0.5 3.5 L3 1 L5.5 3.5" stroke="#9a9a9a" fill="none"/></svg>
<svg class="abs" style="left:1266px;top:345px" width="6" height="4"><path d="M1 0.800 L3 2.800 L5 0.800" stroke="#9a9a9a" fill="none"/></svg>
<svg class="abs" style="left:1226px;top:355px" width="40" height="10" viewBox="1226 355 40 10"><path d="M1230.500 357.500 L1236.500 357.500 L1236.500 363.500 L1232.500 363.500 M1230.500 357.500 L1230.500 360" stroke="#e0e0e0" fill="none"/><path d="M1251.500 358 L1251.500 363.500 L1255.500 363.500 L1255.500 358 M1250.500 357.500 L1256.500 357.500" stroke="#6e6e6e" fill="none"/></svg>
<div class="abs" style="left:1104px;top:371px;width:172px;height:319px;background:#535353"></div>
<div class="abs" style="left:1104px;top:371px;width:172px;height:12px;background:#424242"></div>
<div class="abs" style="left:1105px;top:371px;width:31px;height:12px;background:#535353"></div>
<div class="t" style="left:1109px;top:373px;font-size:7.6px;font-weight:bold;color:#f2f2f2">Layers</div>
<div class="abs" style="left:1264px;top:375px;width:8px;height:1px;background:#b0b0b0;box-shadow:0 2px 0 #b0b0b0"></div>
<div class="abs" style="left:1110px;top:388px;width:62px;height:13px;background:#474747;border:1px solid #5c5c5c;border-radius:2px"></div>
<svg class="abs" style="left:1112px;top:390px" width="9" height="9" viewBox="0 0 9 9"><circle cx="5" cy="3.600" r="2.400" stroke="#e4e4e4" stroke-width="1.100" fill="none"/><path d="M3.300 5.500 L1 8" stroke="#e4e4e4" stroke-width="1.300"/></svg>
<div class="t" style="left:1122px;top:391px;font-size:7.5px;color:#ececec">Kind</div>
<svg class="abs" style="left:1164px;top:393px" width="6" height="4"><path d="M1 0.800 L3 2.800 L5 0.800" stroke="#c8c8c8" fill="none"/></svg>
<svg class="abs" style="left:1178px;top:387px" width="92" height="15" viewBox="1178 387 92 15"><rect x="1180.500" y="390.500" width="8" height="7" fill="none" stroke="#e0e0e0"/><path d="M1181.500 396.500 L1184 393.500 L1186 395.500 L1187 394.500 L1188 396.500 Z" fill="#e0e0e0"/><circle cx="1200" cy="394.500" r="3.600" fill="none" stroke="#e0e0e0"/><path d="M1200 391 A3.500 3.500 0 0 1 1200 398 Z" fill="#e0e0e0"/><rect x="1228.500" y="391.500" width="7" height="6" fill="none" stroke="#e0e0e0" stroke-width="1.200"/><rect x="1227.500" y="390.500" width="2" height="2" fill="#e0e0e0"/><rect x="1234.500" y="390.500" width="2" height="2" fill="#e0e0e0"/><rect x="1227.500" y="396.500" width="2" height="2" fill="#e0e0e0"/><rect x="1234.500" y="396.500" width="2" height="2" fill="#e0e0e0"/><path d="M1245.500 392.500 L1248.500 392.500 L1248.500 398.500 L1244.500 398.500 L1244.500 393.500 Z" fill="#e0e0e0"/><path d="M1247.500 390.500 L1251.500 390.500 L1251.500 396.500 L1249.500 396.500" stroke="#e0e0e0" fill="none"/><circle cx="1264.500" cy="391.500" r="2" fill="#f0f0f0"/></svg>
<div class="t" style="left:1212px;top:388px;font-size:11px;font-weight:bold;color:#e4e4e4;font-family:'Liberation Serif',serif">T</div>
<div class="abs" style="left:1110px;top:406px;width:84px;height:13px;background:#474747;border:1px solid #5c5c5c;border-radius:2px"></div>
<div class="t" style="left:1114px;top:409px;font-size:7.5px;color:#ececec">Normal</div>
<svg class="abs" style="left:1186px;top:411px" width="6" height="4"><path d="M1 0.800 L3 2.800 L5 0.800" stroke="#c8c8c8" fill="none"/></svg>
<div class="t" style="left:1200px;top:409px;font-size:7.5px;color:#c4c4c4">Opacity:</div>
<div class="t" style="left:1233px;top:409px;font-size:7.5px;color:#ececec">100%</div>
<div class="abs" style="left:1229px;top:419px;width:40px;height:1px;background:#6e6e6e"></div>
<svg class="abs" style="left:1261px;top:411px" width="6" height="4"><path d="M1 0.800 L3 2.800 L5 0.800" stroke="#c8c8c8" fill="none"/></svg>
<div class="t" style="left:1110px;top:427px;font-size:7.5px;color:#c4c4c4">Lock:</div>
<svg class="abs" style="left:1130px;top:424px" width="72" height="13" viewBox="1130 424 72 13"><rect x="1133.500" y="427.500" width="7" height="7" fill="none" stroke="#e4e4e4"/><rect x="1135" y="429" width="2" height="2" fill="#e4e4e4"/><rect x="1137" y="431" width="2" height="2" fill="#e4e4e4"/><path d="M1155.500 426.500 L1151.500 431.500" stroke="#e4e4e4" stroke-width="1.600"/><path d="M1151 431.500 Q1151.500 434 1148.500 435 Q1149.500 432.500 1151 431.500 Z" fill="#e4e4e4" stroke="#e4e4e4" stroke-width="0.600"/><path d="M1166 426 L1166 436 M1161 431 L1171 431" stroke="#e4e4e4" stroke-width="1.100"/><path d="M1166 425.500 L1164.500 427.500 L1167.500 427.500 Z M1166 436.500 L1164.500 434.500 L1167.500 434.500 Z M1160.500 431 L1162.500 429.500 L1162.500 432.500 Z M1171.500 431 L1169.500 429.500 L1169.500 432.500 Z" fill="#e4e4e4"/><path d="M1178.500 426 L1178.500 433.500 L1186 433.500 M1176 428.500 L1183.500 428.500 L1183.500 436" stroke="#e4e4e4" stroke-width="1.100" fill="none"/><rect x="1192" y="430" width="7" height="5.500" rx="0.800" fill="#e4e4e4"/><path d="M1193.500 430 L1193.500 428.500 Q1195.500 425.500 1197.500 428.500 L1197.500 430" stroke="#e4e4e4" stroke-width="1.100" fill="none"/></svg>
<div class="t" style="left:1215px;top:427px;font-size:7.5px;color:#c4c4c4">Fill:</div>
<div class="t" style="left:1233px;top:427px;font-size:7.5px;color:#ececec">100%</div>
<div class="abs" style="left:1229px;top:437px;width:40px;height:1px;background:#6e6e6e"></div>
<svg class="abs" style="left:1261px;top:429px" width="6" height="4"><path d="M1 0.800 L3 2.800 L5 0.800" stroke="#c8c8c8" fill="none"/></svg>
<div class="abs" style="left:1104px;top:440px;width:172px;height:1px;background:#484848"></div>
<div class="abs" style="left:1266px;top:440px;width:7px;height:232px;background:#4d4d4d"></div>
<div class="abs" style="left:1108px;top:461.0px;width:158px;height:1px;background:#484848"></div>
<div class="abs" style="left:1125px;top:440.0px;width:1px;height:21px;background:#4a4a4a"></div>
<div class="abs chk" style="left:1128px;top:442.5px;width:21px;height:16px"></div>
<div class="abs" style="left:1134px;top:445.5px;width:7px;height:10px;background:#7a8fa0;border-top:3px solid #4a5a70"></div>
<div class="t" style="left:1156px;top:447.0px;font-size:7.5px;color:#f0f0f0">ref</div>
<div class="abs" style="left:1108px;top:482.3px;width:158px;height:1px;background:#484848"></div>
<div class="abs" style="left:1125px;top:461.3px;width:1px;height:21px;background:#4a4a4a"></div>
<svg class="abs" style="left:1110px;top:468.3px" width="11" height="8" viewBox="0 0 11 8"><path d="M0.500 4 Q5.500 -1.500 10.500 4 Q5.500 9.500 0.500 4 Z" fill="#ececec"/><circle cx="5.500" cy="4" r="2.100" fill="#535353"/><circle cx="5.500" cy="4" r="0.900" fill="#ececec"/></svg>
<div class="abs chk" style="left:1128px;top:463.8px;width:21px;height:16px"></div>
<div class="t" style="left:1156px;top:468.3px;font-size:7.5px;color:#f0f0f0">ref</div>
<div class="abs" style="left:1108px;top:503.6px;width:158px;height:1px;background:#484848"></div>
<div class="abs" style="left:1125px;top:482.6px;width:1px;height:21px;background:#4a4a4a"></div>
<svg class="abs" style="left:1110px;top:489.6px" width="11" height="8" viewBox="0 0 11 8"><path d="M0.500 4 Q5.500 -1.500 10.500 4 Q5.500 9.500 0.500 4 Z" fill="#ececec"/><circle cx="5.500" cy="4" r="2.100" fill="#535353"/><circle cx="5.500" cy="4" r="0.900" fill="#ececec"/></svg>
<div class="abs chk" style="left:1128px;top:485.1px;width:21px;height:16px"></div>
<div class="t" style="left:1156px;top:489.6px;font-size:7.5px;color:#f0f0f0">sketch</div>
<div class="abs" style="left:1126px;top:504.4px;width:140px;height:20.5px;background:#6d6d6d"></div>
<div class="abs" style="left:1108px;top:524.9px;width:158px;height:1px;background:#484848"></div>
<div class="abs" style="left:1125px;top:503.9px;width:1px;height:21px;background:#4a4a4a"></div>
<svg class="abs" style="left:1110px;top:510.9px" width="11" height="8" viewBox="0 0 11 8"><path d="M0.500 4 Q5.500 -1.500 10.500 4 Q5.500 9.500 0.500 4 Z" fill="#ececec"/><circle cx="5.500" cy="4" r="2.100" fill="#535353"/><circle cx="5.500" cy="4" r="0.900" fill="#ececec"/></svg>
<div class="abs chk" style="left:1128px;top:506.4px;width:21px;height:16px"></div>
<div class="abs" style="left:1126.500px;top:504.9px;width:24px;height:19px;border:1px solid #f0f0f0;border-left-width:1px"></div>
<div class="t" style="left:1156px;top:510.9px;font-size:7.5px;color:#f0f0f0">Layer 1</div>
<div class="abs" style="left:1108px;top:546.2px;width:158px;height:1px;background:#484848"></div>
<div class="abs" style="left:1125px;top:525.2px;width:1px;height:21px;background:#4a4a4a"></div>
<svg class="abs" style="left:1110px;top:532.2px" width="11" height="8" viewBox="0 0 11 8"><path d="M0.500 4 Q5.500 -1.500 10.500 4 Q5.500 9.500 0.500 4 Z" fill="#ececec"/><circle cx="5.500" cy="4" r="2.100" fill="#535353"/><circle cx="5.500" cy="4" r="0.900" fill="#ececec"/></svg>
<div class="abs chk" style="left:1128px;top:527.7px;width:21px;height:16px"></div>
<svg class="abs" style="left:1128px;top:527.7px" width="21" height="16"><path d="M3 3 L9 2 M4 6 L8 5 L12 6 M11 3 L17 4 M14 7 L18 7.500" stroke="#2c3038" stroke-width="1.300" fill="none"/></svg>
<div class="t" style="left:1156px;top:532.2px;font-size:7.5px;color:#f0f0f0">trim</div>
<div class="abs" style="left:1108px;top:567.5px;width:158px;height:1px;background:#484848"></div>
<div class="abs" style="left:1125px;top:546.5px;width:1px;height:21px;background:#4a4a4a"></div>
<svg class="abs" style="left:1110px;top:553.5px" width="11" height="8" viewBox="0 0 11 8"><path d="M0.500 4 Q5.500 -1.500 10.500 4 Q5.500 9.500 0.500 4 Z" fill="#ececec"/><circle cx="5.500" cy="4" r="2.100" fill="#535353"/><circle cx="5.500" cy="4" r="0.900" fill="#ececec"/></svg>
<div class="abs chk" style="left:1128px;top:549.0px;width:21px;height:16px"></div>
<svg class="abs" style="left:1128px;top:549.0px" width="21" height="16"><path d="M2 12 L2 8 L5 7 L5 5 L9 4 L15 5.500 L15 8 L19 9 L19 12 Z" fill="#7aa0b6"/></svg>
<div class="t" style="left:1156px;top:553.5px;font-size:7.5px;color:#f0f0f0">walls</div>
<div class="abs" style="left:1108px;top:588.8px;width:158px;height:1px;background:#484848"></div>
<div class="abs" style="left:1125px;top:567.8px;width:1px;height:21px;background:#4a4a4a"></div>
<svg class="abs" style="left:1110px;top:574.8px" width="11" height="8" viewBox="0 0 11 8"><path d="M0.500 4 Q5.500 -1.500 10.500 4 Q5.500 9.500 0.500 4 Z" fill="#ececec"/><circle cx="5.500" cy="4" r="2.100" fill="#535353"/><circle cx="5.500" cy="4" r="0.900" fill="#ececec"/></svg>
<div class="abs chk" style="left:1128px;top:570.3px;width:21px;height:16px"></div>
<svg class="abs" style="left:1128px;top:570.3px" width="21" height="16"><path d="M6 11.500 L21 11 L21 12 L8 12.500 Z" fill="#b0b0b0"/></svg>
<div class="t" style="left:1156px;top:574.8px;font-size:7.5px;color:#f0f0f0">sidewalk</div>
<div class="abs" style="left:1108px;top:610.1px;width:158px;height:1px;background:#484848"></div>
<div class="abs" style="left:1125px;top:589.1px;width:1px;height:21px;background:#4a4a4a"></div>
<svg class="abs" style="left:1110px;top:596.1px" width="11" height="8" viewBox="0 0 11 8"><path d="M0.500 4 Q5.500 -1.500 10.500 4 Q5.500 9.500 0.500 4 Z" fill="#ececec"/><circle cx="5.500" cy="4" r="2.100" fill="#535353"/><circle cx="5.500" cy="4" r="0.900" fill="#ececec"/></svg>
<div class="abs chk" style="left:1128px;top:591.6px;width:21px;height:16px"></div>
<div class="abs" style="left:1128px;top:601.6px;width:21px;height:6px;background:#808080"></div>
<div class="t" style="left:1156px;top:596.1px;font-size:7.5px;color:#f0f0f0">road</div>
<div class="abs" style="left:1108px;top:631.4px;width:158px;height:1px;background:#484848"></div>
<div class="abs" style="left:1125px;top:610.4px;width:1px;height:21px;background:#4a4a4a"></div>
<svg class="abs" style="left:1110px;top:617.4px" width="11" height="8" viewBox="0 0 11 8"><path d="M0.500 4 Q5.500 -1.500 10.500 4 Q5.500 9.500 0.500 4 Z" fill="#ececec"/><circle cx="5.500" cy="4" r="2.100" fill="#535353"/><circle cx="5.500" cy="4" r="0.900" fill="#ececec"/></svg>
<div class="abs" style="left:1128px;top:612.9px;width:21px;height:16px;background:#ffffff"></div>
<div class="t" style="left:1156px;top:617.4px;font-size:7.5px;color:#f0f0f0">sky</div>
<svg class="abs" style="left:1138px;top:676px" width="125" height="12" viewBox="1138 676 125 12"><rect x="1141" y="680.500" width="4.500" height="3" rx="1.500" fill="none" stroke="#7a7a7a"/><rect x="1144.500" y="680.500" width="4.500" height="3" rx="1.500" fill="none" stroke="#7a7a7a"/><rect x="1176.500" y="678.500" width="8" height="7" fill="#e4e4e4"/><circle cx="1180.500" cy="682" r="2" fill="#535353"/><circle cx="1200" cy="682" r="3.500" fill="none" stroke="#e4e4e4"/><path d="M1200 678.500 A3.500 3.500 0 0 0 1200 685.500 Z" fill="#e4e4e4"/><path d="M1213 679 L1216 679 L1217 680 L1221 680 L1221 685.500 L1213 685.500 Z" fill="#e4e4e4"/><path d="M1231.500 678.500 L1238.500 678.500 L1238.500 685.500 L1233.500 685.500 M1231.500 678.500 L1231.500 682" stroke="#e4e4e4" fill="none"/><path d="M1250.500 680 L1250.500 686 L1255.500 686 L1255.500 680 M1249.500 679.500 L1256.500 679.500 M1252 678.500 L1254 678.500 M1252.500 681.500 L1252.500 684.500 M1254 681.500 L1254 684.500" stroke="#e4e4e4" fill="none" stroke-width="0.900"/></svg>
<div class="t" style="left:1159px;top:677px;font-size:9px;font-style:italic;color:#e4e4e4;font-family:'Liberation Serif',serif">fx</div>
<!-- ===== Windows taskbar ===== -->
<div class="abs" id="taskbar" style="left:0;top:691px;width:1280px;height:29px;background:#070707"></div>
<div class="abs" style="left:67px;top:691px;width:31px;height:29px;background:#2b2b2b"></div>
<div class="abs" style="left:67px;top:716px;width:31px;height:1.500px;background:#a8c4dc"></div>
<div class="abs" style="left:165px;top:716px;width:30px;height:1.5px;background:#d8d8d8"></div>
<div class="abs" style="left:328px;top:716px;width:29px;height:1.5px;background:#d8d8d8"></div>
<div class="abs" style="left:362px;top:716px;width:28px;height:1.5px;background:#d8d8d8"></div>
<svg class="abs" style="left:0;top:691px" width="400" height="29" viewBox="0 691 400 29">
<!-- start -->
<path d="M10 700.500 L14.800 699.800 L14.800 704.600 L10 704.600 Z M15.600 699.700 L21.500 698.800 L21.500 704.600 L15.600 704.600 Z M10 705.400 L14.800 705.400 L14.800 710.200 L10 709.500 Z M15.600 705.400 L21.500 705.400 L21.500 711.200 L15.600 710.300 Z" fill="#f4f4f4"/>
<!-- task view -->
<rect x="43.500" y="700.500" width="6" height="9" fill="none" stroke="#e8e8e8" stroke-width="1.100"/><path d="M43.500 704 L49.500 704" stroke="#e8e8e8"/><path d="M52.500 699.500 L52.500 710.500 M51 701 L54 701 M51 709 L54 709" stroke="#e8e8e8" stroke-width="1.100"/>
<!-- chrome -->
<circle cx="82" cy="705" r="7.500" fill="#e8e8e8"/>
<path d="M82 705 L75.500 701.300 A7.500 7.500 0 0 1 88.500 701.300 Z" fill="#dd4b3e"/>
<path d="M82 705 L88.500 701.300 A7.500 7.500 0 0 1 82 712.500 Z" fill="#f7c92b"/>
<path d="M82 705 L82 712.500 A7.500 7.500 0 0 1 75.500 701.300 Z" fill="#3aa757"/>
<circle cx="82" cy="705" r="3.400" fill="#f4f4f4"/><circle cx="82" cy="705" r="2.600" fill="#4a8af4"/>
<!-- discord -->
<rect x="107.500" y="698" width="13" height="13" rx="2.500" fill="#8c96e6"/>
<path d="M110 702.500 Q114 700.800 118 702.500 L119 708 Q117.500 709.500 116.500 709 L116 708 Q114 708.700 112 708 L111.500 709 Q110.500 709.500 109 708 Z" fill="#f4f4ff"/><circle cx="112.500" cy="705.500" r="0.900" fill="#8c96e6"/><circle cx="115.500" cy="705.500" r="0.900" fill="#8c96e6"/>
<!-- cone icon -->
<path d="M147 697 L150.500 708 L143.500 708 Z" fill="#c8ccc8"/><ellipse cx="147" cy="709" rx="6" ry="3" fill="#5a8a5a"/><path d="M145 703 L149 703 L150 707 L144 707 Z" fill="#4a7a8a"/><ellipse cx="147" cy="709.500" rx="3.500" ry="1.600" fill="#9ab0a0"/>
<!-- obs -->
<circle cx="180" cy="705" r="7" fill="#141414" stroke="#f0f0f0" stroke-width="1.300"/><path d="M180 699.500 Q183.500 702 180.500 705 M185 707 Q181 709 180 705 M175.500 708 Q176 703.500 180 705" stroke="#e8e8e8" stroke-width="1.100" fill="none"/>
<!-- blue circle -->
<circle cx="213.500" cy="705" r="7" fill="#1a5ae0"/><circle cx="213.500" cy="703.500" r="3" fill="#f4f4f4"/><path d="M212 705 L213.500 710 L215 705 Z" fill="#f4f4f4"/><circle cx="213.500" cy="703.500" r="1.200" fill="#1a5ae0"/>
<!-- red lightning -->
<rect x="238" y="697.500" width="15" height="15" rx="1.500" fill="#c0161c"/><path d="M247 699 L242.500 706 L245.500 706 L244 711.500 L249 704 L246 704 Z" fill="#f8f8f8"/>
<!-- red/blue icon -->
<rect x="270" y="698" width="13" height="14" rx="2" fill="#c8424a" transform="rotate(-8 276.500 705)"/><rect x="272.500" y="700" width="8" height="10" fill="#4a6ac8"/><path d="M274 702 L279 702 M274 705 L279 705 M276 702 L276 709" stroke="#f0d8d8" stroke-width="1.200"/>
<!-- lock circle -->
<circle cx="309.500" cy="705" r="7.500" fill="#e8e8f4"/><circle cx="309.500" cy="705" r="6" fill="#1c2a6a"/><rect x="306.500" y="704.500" width="6" height="4.500" fill="#f0f0f0"/><path d="M307.500 704.500 L307.500 703 Q309.500 700 311.500 703 L311.500 704.500" stroke="#f0f0f0" stroke-width="1.100" fill="none"/>
<!-- Ps -->
<rect x="335" y="698" width="14.500" height="14" fill="#0a1c2c" stroke="#45c0ee" stroke-width="1.200"/>
<!-- notepad -->
<path d="M370 699 L381 698 L379.500 710 L368.500 711 Z" fill="#a8d8d8"/><path d="M371.500 700.500 L379.500 699.800 L378.500 708 L370.500 709 Z" fill="#e4f4f0"/><path d="M368.500 711 L379.500 710 L381 712 L370 713 Z" fill="#6a8a9a"/>
</svg>
<div class="t" style="left:337.500px;top:701px;font-size:8.500px;font-weight:bold;color:#4cc4f0;letter-spacing:-0.300px">Ps</div>
<div class="abs" style="left:1274px;top:691px;width:1px;height:29px;background:#4a4a4a"></div>
<!-- tray -->
<svg class="abs" style="left:1030px;top:691px" width="250" height="29" viewBox="1030 691 250 29">
<path d="M1036 700 L1040.500 699 L1045 700 L1045 705 Q1044 709 1040.500 710.500 Q1037 709 1036 705 Z" fill="#e8e8e8"/><path d="M1040.500 699 L1040.500 710.500 M1036 704.500 L1045 704.500" stroke="#666" stroke-width="0.800"/><circle cx="1044" cy="708.500" r="2.600" fill="#d82020"/><path d="M1043 707.500 L1045 709.500 M1045 707.500 L1043 709.500" stroke="#fff" stroke-width="0.700"/>
<circle cx="1058.500" cy="704.500" r="5" fill="none" stroke="#e8e8e8" stroke-width="1.200"/><path d="M1058.500 701 L1058.500 704.500 L1061.500 703" stroke="#e8e8e8" fill="none"/><circle cx="1055" cy="708.500" r="2.400" fill="#d82020"/>
<rect x="1070" y="700" width="10" height="9" fill="#4f8a1c"/><path d="M1072 704.500 Q1075 701.500 1078.500 704.500 Q1075 707.500 1072 704.500 Z" fill="none" stroke="#d8f0b0" stroke-width="0.900"/>
<path d="M1086 708 Q1085 702 1089 701 Q1093 700.500 1093 705 L1095 709" stroke="#dcdcdc" stroke-width="1.100" fill="none"/><circle cx="1089.500" cy="703" r="1.600" fill="#dcdcdc"/><path d="M1090 709.500 L1096 709.500" stroke="#dcdcdc"/>
<rect x="1104.500" y="700.500" width="5" height="9" rx="1" fill="none" stroke="#e4e4e4" stroke-width="1.100"/><rect x="1105.500" y="698.500" width="3" height="2" fill="#e4e4e4"/>
<rect x="1117.500" y="700.500" width="8" height="6" fill="none" stroke="#e4e4e4" stroke-width="1.100"/><path d="M1119 709.500 L1124 709.500 M1121.500 707 L1121.500 709" stroke="#e4e4e4"/><rect x="1122.500" y="703.500" width="4" height="5" fill="#070707" stroke="#e4e4e4" stroke-width="0.900"/>
<path d="M1132 703 L1134 703 L1137 700 L1137 709 L1134 706.500 L1132 706.500 Z" fill="#e4e4e4"/><path d="M1139 702.500 Q1140.500 704.700 1139 707 M1141 701 Q1143.500 704.700 1141 708.500" stroke="#e4e4e4" stroke-width="0.900" fill="none"/>
<path d="M1161 699 L1154 707" stroke="#e8e8e8" stroke-width="1.600"/><path d="M1153.500 707 Q1151 707.500 1152 710 Q1155 710 1154.500 707.500" stroke="#e8e8e8" fill="none" stroke-width="0.900"/><circle cx="1160.500" cy="708" r="1.800" fill="none" stroke="#e8e8e8" stroke-width="0.900"/>
<path d="M1248.500 700.500 L1259.500 700.500 L1259.500 708.500 L1255.500 708.500 L1254 711 L1252.500 708.500 L1248.500 708.500 Z" fill="none" stroke="#f0f0f0" stroke-width="1.100"/>
</svg>
<div class="t" style="left:1172px;top:702px;font-size:7.400px;color:#f0f0f0">ENG</div>
<div class="t" style="left:1202px;top:695px;font-size:7.700px;color:#f4f4f4">3:51 PM</div>
<div class="t" style="left:1195px;top:707px;font-size:8px;color:#f4f4f4">2019-07-24</div>

</div>
</body></html>
